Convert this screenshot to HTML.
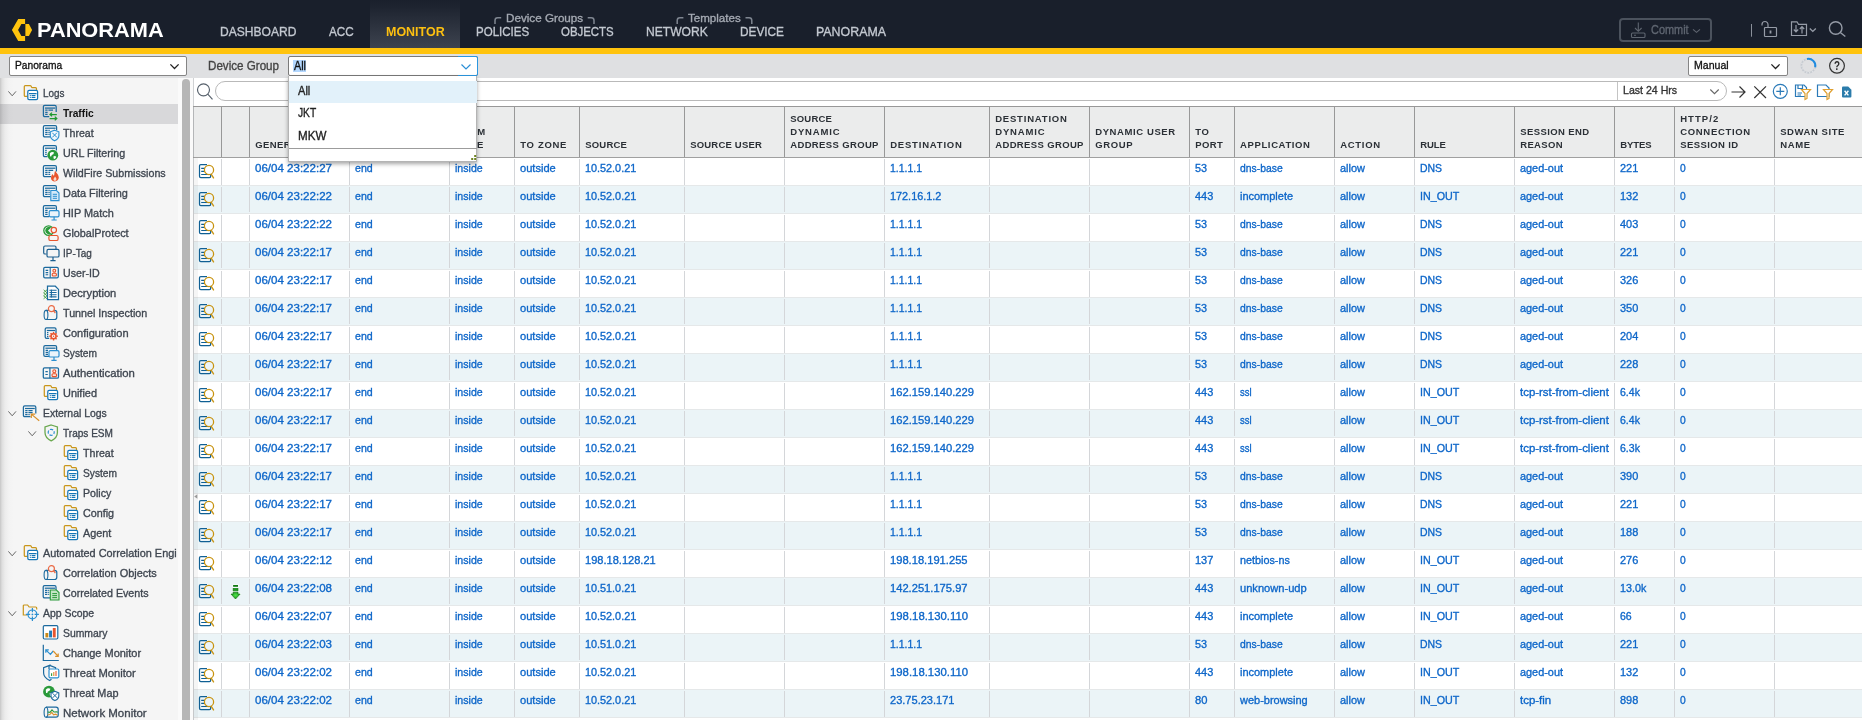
<!DOCTYPE html>
<html lang="en"><head><meta charset="utf-8"><title>Panorama</title>
<style>
*{box-sizing:border-box}
html,body{margin:0;padding:0}
body{width:1862px;height:720px;overflow:hidden;position:relative;background:#fff;font-family:"Liberation Sans",sans-serif;font-size:11px;color:#333}
#wrap{position:absolute;left:0;top:0;width:1862px;height:720px;will-change:transform}
.a,.t,svg{position:absolute}
.t{transform-origin:0 50%;white-space:nowrap;display:block;-webkit-text-stroke:.33px}
svg{overflow:visible}
#top{position:absolute;left:0;top:0;width:1862px;height:48px;background:#191f2b}
#ybar{position:absolute;left:0;top:48px;width:1862px;height:6px;background:#ffc30d}
#sub{position:absolute;left:0;top:54px;width:1862px;height:24px;background:#dfe0e2}
#montab{position:absolute;left:370px;top:0;width:90px;height:48px;background:linear-gradient(#1a202c 0,#1e2430 15%,#3d434f 100%)}
.sel{position:absolute;background:#fff;border:1px solid #858585;border-radius:2px;height:20px}
#side{position:absolute;left:0;top:78px;width:178px;height:642px;background:linear-gradient(90deg,#c6c6c6 0,#dedede 2px,#ececec 5px,#f3f3f3 9px,#f5f5f5 14px)}
.on{position:absolute;left:0;top:104px;width:178px;height:20px;background:linear-gradient(90deg,#b4b4b6 0,#c8c8ca 3px,#d6d6d8 9px,#d8d8da 14px)}
#ghead{position:absolute;left:193px;top:106px;width:1669px;height:52px;background:#ebecec;border-top:1px solid #989898;border-bottom:1px solid #989898}
.hb{position:absolute;top:107px;width:1px;height:50px;background:#989898}
.gr{position:absolute;left:194px;width:1668px;height:28px;background:#fff}
.gr.alt{height:29px;background:#ebf4f7;border-top:1px solid #e5e8e9;border-bottom:1px solid #e5e8e9}
.cb{position:absolute;top:159px;width:1px;height:558px;background:#d4d6d9}
.rg{position:absolute;left:194px;width:1668px;height:3px}
</style></head><body><div id="wrap">

<div id="top"><div id="montab"></div>
<svg style="left:0;top:0" width="40" height="48" viewBox="0 0 40 48"><path d="M18.2 18.9H25.1V23.9H21.4L18.05 30L21.4 35.9H25.1V40.9H18.2L11.9 30Z" fill="#ffc40e"/><path d="M25.4 23.9H28.9L32.1 29.9L28.9 35.9H25.4Z" fill="#ffc40e"/></svg>
<span class="t" style="left:37.0px;top:18.9px;font-size:20px;line-height:22px;transform:scaleX(1.089);color:#fff;font-weight:bold;-webkit-text-stroke:0">PANORAMA</span>
<span class="t" style="left:219.8px;top:24px;font-size:12.8px;line-height:15px;transform:scaleX(0.942);color:#c3c8d0">DASHBOARD</span>
<span class="t" style="left:328.5px;top:24px;font-size:12.8px;line-height:15px;transform:scaleX(0.915);color:#c3c8d0">ACC</span>
<span class="t" style="left:385.5px;top:24px;font-size:12.8px;line-height:15px;transform:scaleX(0.975);color:#fdc010;font-weight:bold;-webkit-text-stroke:0">MONITOR</span>
<span class="t" style="left:476.3px;top:24px;font-size:12.8px;line-height:15px;transform:scaleX(0.901);color:#c3c8d0">POLICIES</span>
<span class="t" style="left:561.3px;top:24px;font-size:12.8px;line-height:15px;transform:scaleX(0.893);color:#c3c8d0">OBJECTS</span>
<span class="t" style="left:646.0px;top:24px;font-size:12.8px;line-height:15px;transform:scaleX(0.943);color:#c3c8d0">NETWORK</span>
<span class="t" style="left:740.0px;top:24px;font-size:12.8px;line-height:15px;transform:scaleX(0.923);color:#c3c8d0">DEVICE</span>
<span class="t" style="left:816.0px;top:24px;font-size:12.8px;line-height:15px;transform:scaleX(0.968);color:#c3c8d0">PANORAMA</span>
<span class="t" style="left:506.0px;top:11.7px;font-size:11px;line-height:12px;transform:scaleX(1.061);color:#a4a9b2">Device Groups</span>
<span class="t" style="left:688.3px;top:11.7px;font-size:11px;line-height:12px;transform:scaleX(1.051);color:#a4a9b2">Templates</span>
<svg style="left:0;top:0" width="800" height="48" viewBox="0 0 800 48"><g fill="none" stroke="#7f8691" stroke-width="1.5"><path d="M495 24V20.5Q495 17.8 497.7 17.8H501.2"/><path d="M587.7 17.8H591.3Q594 17.8 594 20.5V24"/><path d="M677.2 24V20.5Q677.2 17.8 679.9 17.8H683.4"/><path d="M745.5 17.8H749.1Q751.8 17.8 751.8 20.5V24"/></g></svg>
<div class="a" style="left:1619px;top:18px;width:93px;height:24px;border:2px solid #4b525d;border-radius:4px"></div>
<svg style="left:0;top:0" width="1862" height="48" viewBox="0 0 1862 48">
<g fill="none" stroke="#5f6671" stroke-width="1.1"><path d="M1638.3 22.5V31M1635 28L1638.3 31.3L1641.6 28"/><rect x="1631.5" y="33" width="13.5" height="4.5" rx="1"/><path d="M1634 35.3H1636"/></g>
<path d="M1693 29.3L1696.5 32.3L1700 29.3" fill="none" stroke="#5f6671" stroke-width="1.1"/>
<path d="M1751.5 24V36.7" stroke="#8a909a" stroke-width="1"/>
<g fill="none" stroke="#969ca7" stroke-width="1.2"><rect x="1764.5" y="27.5" width="12" height="9" rx=".8"/><path d="M1768 27.5V24.5A3 3 0 0 0 1762 24.5V25.5"/><path d="M1770.5 30.5V33.5" stroke-width="1.8"/></g>
<g fill="none" stroke="#969ca7" stroke-width="1.2"><path d="M1791.5 35.5V21.8H1797L1798.5 24.3H1806.5V35.5Z"/><path d="M1796 25V31.5M1793.8 29.5L1796 31.8L1798.2 29.5M1802 33.5V27M1799.8 29L1802 26.7L1804.2 29"/><path d="M1809.8 28.6L1812.8 31.4L1815.8 28.6" stroke-width="1.4"/></g>
<g fill="none" stroke="#969ca7" stroke-width="1.4"><circle cx="1835.7" cy="28" r="6.3"/><path d="M1840.3 32.5L1845.3 36.5"/></g>
</svg>
<span class="t" style="left:1650.7px;top:23.200000000000003px;font-size:12px;line-height:14px;transform:scaleX(0.910);color:#5f6671">Commit</span>
</div><div id="ybar"></div>
<div id="sub"></div>
<div class="sel" style="left:9px;top:56px;width:178px"></div>
<span class="t" style="left:14.5px;top:58.7px;font-size:11.4px;line-height:12px;transform:scaleX(0.896);color:#111">Panorama</span>
<svg style="left:170px;top:64.2px" width="9" height="5.5" viewBox="0 0 9 5.5"><path d="M0.4 0.4 L4.5 4.5 L8.6 0.4" fill="none" stroke="#222" stroke-width="1.3"/></svg>
<span class="t" style="left:208.3px;top:59px;font-size:12px;line-height:14px;transform:scaleX(0.968);color:#444">Device Group</span>
<div class="sel" style="left:1688px;top:56px;width:100px"></div>
<span class="t" style="left:1693.6px;top:58.7px;font-size:11.4px;line-height:12px;transform:scaleX(0.928);color:#111">Manual</span>
<svg style="left:1771.2px;top:64.2px" width="9" height="5.5" viewBox="0 0 9 5.5"><path d="M0.4 0.4 L4.5 4.5 L8.6 0.4" fill="none" stroke="#222" stroke-width="1.3"/></svg>
<svg style="left:0;top:54px" width="1862" height="24" viewBox="0 54 1862 24">
<circle cx="1808.3" cy="65.8" r="7" fill="none" stroke="#c6cad0" stroke-width="1.7"/><circle cx="1808.3" cy="65.8" r="7" fill="none" stroke="#e3e5e8" stroke-width="1.7" stroke-dasharray="1 2"/>
<path d="M1807 58.9A7 7 0 0 1 1815.2 67.2" fill="none" stroke="#1f8be0" stroke-width="2"/>
<circle cx="1837" cy="65.8" r="7.4" fill="none" stroke="#333" stroke-width="1.2"/>
</svg><span class="t" style="left:1834.0px;top:59.3px;font-size:12px;line-height:14px;transform:scaleX(0.820);color:#2a2a2a;font-weight:bold;-webkit-text-stroke:0">?</span>
<div id="side"></div><div class="on"></div>
<svg style="left:7.5px;top:90.5px" width="8.4" height="5.8" viewBox="0 0 8.4 5.8"><path d="M0.4 0.4 L4.2 4.8 L8.0 0.4" fill="none" stroke="#666" stroke-width="1.0"/></svg>
<svg style="left:23px;top:84px" width="18" height="19" viewBox="0 0 18 19"><path d="M4.6 12.4H2.3Q1.3 12.4 1.3 11.4V2.5Q1.3 1.5 2.3 1.5H7Q7.8 1.5 8.2 2.3L8.6 3.1Q9 3.7 9.8 3.7H12.5Q13.5 3.7 13.5 4.7V6" fill="none" stroke="#c9961a" stroke-width="1.25"/><rect x="4.8" y="6.4" width="9.8" height="9.2" rx="1.3" fill="#fff" stroke="#1575b5" stroke-width="1.25"/><path d="M6 9.6H13.6M6.8 11.5H7.8M8.6 11.5H12.4M6.8 13.4H7.8M8.6 13.4H12.4" stroke="#1575b5" stroke-width="1.2"/></svg>
<span class="t" style="left:43.3px;top:86.7px;font-size:11px;line-height:12px;transform:scaleX(0.901);color:#3f4650">Logs</span>
<svg style="left:43px;top:104px" width="18" height="19" viewBox="0 0 18 19"><path d="M6.2 12.6H1.7999999999999998Q0.4 12.6 0.4 11.2V2.8Q0.4 1.4 1.7999999999999998 1.4H11.799999999999999Q13.2 1.4 13.2 2.8V8" fill="none" stroke="#1c6a9e" stroke-width="1.25"/><path d="M2.0 4.1H12.2" stroke="#1c6a9e" stroke-width="1.25"/><path d="M2.2 6.2H4.6000000000000005M5.4 6.2H10.0M2.2 8.3H4.6000000000000005M2.2 10.3H4.6000000000000005" stroke="#1c6a9e" stroke-width="1.25"/><path d="M13.8 10.5H7M9 8.6L7 10.5L9 12.4M6.6 14.5H13.8M11.8 12.6L13.8 14.5L11.8 16.4" fill="none" stroke="#1e9a2e" stroke-width="1.25"/></svg>
<span class="t" style="left:63.3px;top:106.7px;font-size:11px;line-height:12px;transform:scaleX(0.930);color:#111;font-weight:bold;-webkit-text-stroke:0">Traffic</span>
<svg style="left:43px;top:124px" width="18" height="19" viewBox="0 0 18 19"><path d="M7.5 12.8H1.7999999999999998Q0.4 12.8 0.4 11.4V2.9Q0.4 1.5 1.7999999999999998 1.5H12.2Q13.6 1.5 13.6 2.9V6.6" fill="none" stroke="#1c6a9e" stroke-width="1.25"/><path d="M2.0 4.2H12.6" stroke="#1c6a9e" stroke-width="1.25"/><path d="M2.2 6.3H4.6000000000000005M5.4 6.3H6.7M2.2 8.4H4.6000000000000005M5.4 8.4H6.7M2.2 10.4H4.6000000000000005M5.4 10.4H6.7" stroke="#1c6a9e" stroke-width="1.25"/><path d="M11.6 6.2L15.9 7.800000000000001V11.5Q15.9 14.892 11.6 16.8Q7.3 14.892 7.3 11.5V7.800000000000001Z" fill="#eef6fc" stroke="#2b8fd0" stroke-width="1.1"/><path d="M9.3 8.776L13.899999999999999 13.376000000000001M13.899999999999999 8.776L9.3 13.376000000000001" stroke="#2b8fd0" stroke-width="1"/></svg>
<span class="t" style="left:63.3px;top:126.69999999999999px;font-size:11px;line-height:12px;transform:scaleX(0.966);color:#3f4650">Threat</span>
<svg style="left:43px;top:144px" width="18" height="19" viewBox="0 0 18 19"><path d="M4.5 12.6H1.7999999999999998Q0.4 12.6 0.4 11.2V2.9Q0.4 1.5 1.7999999999999998 1.5H12.0Q13.4 1.5 13.4 2.9V6.6" fill="none" stroke="#1c6a9e" stroke-width="1.25"/><path d="M2.0 4.2H12.4" stroke="#1c6a9e" stroke-width="1.25"/><path d="M2.2 6.3H3.7M2.2 8.4H3.7M2.2 10.4H3.7" stroke="#1c6a9e" stroke-width="1.25"/><circle cx="9.8" cy="11.2" r="5.4" fill="#2a9a3a"/><path d="M6.83 9.309999999999999q1.89 -1.89 4.32 -0.81q-0.54 2.43 -2.43 2.43q-0.27 2.16 -1.62 1.35z" fill="#fff"/><path d="M10.34 12.549999999999999q2.16 -1.08 2.9700000000000006 0.54q-0.81 2.16 -2.43 2.16z" fill="#fff"/></svg>
<span class="t" style="left:63.3px;top:146.7px;font-size:11px;line-height:12px;transform:scaleX(0.975);color:#3f4650">URL Filtering</span>
<svg style="left:43px;top:164px" width="18" height="19" viewBox="0 0 18 19"><path d="M8 12.6H1.7999999999999998Q0.4 12.6 0.4 11.2V2.9Q0.4 1.5 1.7999999999999998 1.5H12.0Q13.4 1.5 13.4 2.9V7.6" fill="none" stroke="#1c6a9e" stroke-width="1.25"/><path d="M2.0 4.2H12.4" stroke="#1c6a9e" stroke-width="1.25"/><path d="M2.2 6.3H4.6000000000000005M5.4 6.3H10.2M2.2 8.4H4.6000000000000005M5.4 8.4H7.2M2.2 10.4H4.6000000000000005M5.4 10.4H7.2" stroke="#1c6a9e" stroke-width="1.25"/><path d="M12.2 6.8C13 9 15.8 10.5 15.8 13.6C15.8 16 14 17.4 11.9 17.4C9.6 17.4 8 15.9 8 13.9C8 12.2 8.9 11.2 9.5 10.1C9.9 11.1 10.4 11.6 11 11.7C11.6 10.2 11.2 8.5 12.2 6.8Z" fill="#e8552d"/><path d="M12 12.5C12.8 13.6 13.6 14.2 13.4 15.4C13.2 16.4 12.5 16.8 11.8 16.8C11 16.8 10.4 16.2 10.5 15.3C10.6 14.3 11.6 13.8 12 12.5Z" fill="#fbd9cc"/></svg>
<span class="t" style="left:63.3px;top:166.7px;font-size:11px;line-height:12px;transform:scaleX(0.971);color:#3f4650">WildFire Submissions</span>
<svg style="left:43px;top:184px" width="18" height="19" viewBox="0 0 18 19"><path d="M7.5 12.6H1.7999999999999998Q0.4 12.6 0.4 11.2V2.9Q0.4 1.5 1.7999999999999998 1.5H12.0Q13.4 1.5 13.4 2.9V6" fill="none" stroke="#1c6a9e" stroke-width="1.25"/><path d="M2.0 4.2H12.4" stroke="#1c6a9e" stroke-width="1.25"/><path d="M2.2 6.3H4.6000000000000005M5.4 6.3H6.7M2.2 8.4H4.6000000000000005M5.4 8.4H6.7M2.2 10.4H4.6000000000000005M5.4 10.4H6.7" stroke="#1c6a9e" stroke-width="1.25"/><path d="M7.8 6.5H13.5L16 9V16.6H7.8Z" fill="#d4e9f8" stroke="#2b8fd0" stroke-width="1.1"/><path d="M9.8 10.3H14M9.8 12.3H14M9.8 14.3H14" stroke="#2b8fd0" stroke-width="1"/></svg>
<span class="t" style="left:63.3px;top:186.7px;font-size:11px;line-height:12px;transform:scaleX(0.992);color:#3f4650">Data Filtering</span>
<svg style="left:43px;top:204px" width="18" height="19" viewBox="0 0 18 19"><path d="M6 12.6H1.7999999999999998Q0.4 12.6 0.4 11.2V2.9Q0.4 1.5 1.7999999999999998 1.5H12.0Q13.4 1.5 13.4 2.9V6.3" fill="none" stroke="#1c6a9e" stroke-width="1.25"/><path d="M2.0 4.2H12.4" stroke="#1c6a9e" stroke-width="1.25"/><path d="M2.2 6.3H4.6000000000000005M2.2 8.4H4.6000000000000005M2.2 10.4H4.6000000000000005" stroke="#1c6a9e" stroke-width="1.25"/><rect x="6.2" y="6.6" width="9.8" height="6.200000000000001" rx="1.3" fill="#eaf4fb" stroke="#2b8fd0" stroke-width="1.2"/><path d="M11.1 12.8V16M8.5 16H13.7" stroke="#2b8fd0" stroke-width="1.2" fill="none"/></svg>
<span class="t" style="left:63.3px;top:206.7px;font-size:11px;line-height:12px;transform:scaleX(0.991);color:#3f4650">HIP Match</span>
<svg style="left:43px;top:224px" width="18" height="19" viewBox="0 0 18 19"><circle cx="5.6" cy="6.6" r="4.8" fill="none" stroke="#2a9a3a" stroke-width="1.3"/><path d="M8.2 3.4A4 4 0 0 0 2.2 6.6A4 4 0 0 0 8.2 9.8L5 6.6Z" fill="#2a9a3a"/><circle cx="10.8" cy="6.1" r="2.7" fill="#f5f5f5" stroke="#e8552d" stroke-width="1.2"/><rect x="5.9" y="11.5" width="9.2" height="5" rx="1.6" fill="#f5f5f5" stroke="#e8552d" stroke-width="1.2"/></svg>
<span class="t" style="left:63.3px;top:226.7px;font-size:11px;line-height:12px;transform:scaleX(0.984);color:#3f4650">GlobalProtect</span>
<svg style="left:43px;top:244px" width="18" height="19" viewBox="0 0 18 19"><path d="M3.5 10H2Q0.7 10 0.7 8.7V3.3Q0.7 2 2 2H11.7Q13 2 13 3.3V5" fill="none" stroke="#1c5f8f" stroke-width="1.2"/><rect x="4" y="5.4" width="12" height="7.6" rx="1.3" fill="#f5f5f5" stroke="#1c5f8f" stroke-width="1.2"/><path d="M10.0 13V16.6M7.4 16.6H12.6" stroke="#1c5f8f" stroke-width="1.2" fill="none"/></svg>
<span class="t" style="left:63.3px;top:246.7px;font-size:11px;line-height:12px;transform:scaleX(0.906);color:#3f4650">IP-Tag</span>
<svg style="left:43px;top:264px" width="18" height="19" viewBox="0 0 18 19"><rect x="0.7" y="3.4" width="14.6" height="10.4" rx="1.3" fill="none" stroke="#1c6a9e" stroke-width="1.25"/><path d="M7.2 3.4V13.8M2.6 6.4H5.2M2.6 8.6H5.2M2.6 10.8H5.2" stroke="#1c6a9e" stroke-width="1.1"/><circle cx="11.3" cy="6.7" r="1.4" fill="#fbe3da" stroke="#e8552d" stroke-width="1.1"/><rect x="9.2" y="9.2" width="4.2" height="2.8" rx="1" fill="#fbe3da" stroke="#e8552d" stroke-width="1.1"/></svg>
<span class="t" style="left:63.3px;top:266.7px;font-size:11px;line-height:12px;transform:scaleX(0.968);color:#3f4650">User-ID</span>
<svg style="left:43px;top:284px" width="18" height="19" viewBox="0 0 18 19"><path d="M0.6 5.8L4 8.8M4 5.8L0.6 8.8" stroke="#3fa13f" stroke-width="0.9"/><path d="M0.6 8.8L4 11.8M4 8.8L0.6 11.8" stroke="#3fa13f" stroke-width="0.9"/><path d="M0.6 11.8L4 14.8M4 11.8L0.6 14.8" stroke="#3fa13f" stroke-width="0.9"/><path d="M4.5 2.2H12.3L15.5 5.4V15.5H4.5Z" fill="#fff" stroke="#1c6a9e" stroke-width="1.25"/><path d="M6.4 6.3H13.6M6.4 8.5H13.6M6.4 10.7H13.6M6.4 12.9H13.6M8.4 5.5V13.8" stroke="#1c6a9e" stroke-width="1.1"/></svg>
<span class="t" style="left:63.3px;top:286.7px;font-size:11px;line-height:12px;transform:scaleX(1.014);color:#3f4650">Decryption</span>
<svg style="left:43px;top:304px" width="18" height="19" viewBox="0 0 18 19"><path d="M3 6.4H11.600000000000001Q13.8 6.4 13.8 8.600000000000001V13.3Q13.8 15.5 11.600000000000001 15.5H3" fill="none" stroke="#1c6a9e" stroke-width="1.2"/><ellipse cx="3" cy="10.95" rx="1.9" ry="4.55" fill="none" stroke="#1c6a9e" stroke-width="1.1"/><circle cx="8.4" cy="4.7" r="3" fill="#f5f5f5" stroke="#ea6a45" stroke-width="1.2"/><path d="M10.6 6.9L12.4 9" stroke="#ea6a45" stroke-width="1.3"/></svg>
<span class="t" style="left:63.3px;top:306.7px;font-size:11px;line-height:12px;transform:scaleX(0.974);color:#3f4650">Tunnel Inspection</span>
<svg style="left:43px;top:324px" width="18" height="19" viewBox="0 0 18 19"><path d="M6.2 14.3H3.6Q2.2 14.3 2.2 12.9V5.199999999999999Q2.2 3.8 3.6 3.8H11.6Q13 3.8 13 5.199999999999999V9" fill="none" stroke="#1c6a9e" stroke-width="1.25"/><path d="M3.8000000000000003 6.5H12" stroke="#1c6a9e" stroke-width="1.25"/><path d="M4.0 8.6H5.4M4.0 10.7H5.4M4.0 12.7H5.4" stroke="#1c6a9e" stroke-width="1.25"/><rect x="9.85" y="7.9" width="1.4" height="1.7" fill="#e8552d" transform="rotate(0 10.55 12.2)"/><rect x="9.85" y="7.9" width="1.4" height="1.7" fill="#e8552d" transform="rotate(45 10.55 12.2)"/><rect x="9.85" y="7.9" width="1.4" height="1.7" fill="#e8552d" transform="rotate(90 10.55 12.2)"/><rect x="9.85" y="7.9" width="1.4" height="1.7" fill="#e8552d" transform="rotate(135 10.55 12.2)"/><rect x="9.85" y="7.9" width="1.4" height="1.7" fill="#e8552d" transform="rotate(180 10.55 12.2)"/><rect x="9.85" y="7.9" width="1.4" height="1.7" fill="#e8552d" transform="rotate(225 10.55 12.2)"/><rect x="9.85" y="7.9" width="1.4" height="1.7" fill="#e8552d" transform="rotate(270 10.55 12.2)"/><rect x="9.85" y="7.9" width="1.4" height="1.7" fill="#e8552d" transform="rotate(315 10.55 12.2)"/><circle cx="10.55" cy="12.2" r="2.5" fill="#f5f5f5" stroke="#e8552d" stroke-width="1.5"/><circle cx="10.55" cy="12.2" r="0.7" fill="#e8552d"/></svg>
<span class="t" style="left:63.3px;top:326.7px;font-size:11px;line-height:12px;transform:scaleX(1.002);color:#3f4650">Configuration</span>
<svg style="left:43px;top:344px" width="18" height="19" viewBox="0 0 18 19"><path d="M6 12.4H2.2Q0.8 12.4 0.8 11.0V2.9Q0.8 1.5 2.2 1.5H12.2Q13.6 1.5 13.6 2.9V6.3" fill="none" stroke="#1c6a9e" stroke-width="1.25"/><path d="M2.4000000000000004 4.2H12.6" stroke="#1c6a9e" stroke-width="1.25"/><path d="M2.6 6.3H5.0M2.6 8.4H5.0M2.6 10.4H5.0" stroke="#1c6a9e" stroke-width="1.25"/><rect x="6" y="6.6" width="10" height="6.4" rx="1.3" fill="#eaf4fb" stroke="#2b8fd0" stroke-width="1.2"/><path d="M11.0 13V16.4M8.4 16.4H13.6" stroke="#2b8fd0" stroke-width="1.2" fill="none"/></svg>
<span class="t" style="left:63.3px;top:346.7px;font-size:11px;line-height:12px;transform:scaleX(0.927);color:#3f4650">System</span>
<svg style="left:43px;top:364px" width="18" height="19" viewBox="0 0 18 19"><rect x="0.3" y="3.8" width="15.2" height="10.4" rx="1.3" fill="none" stroke="#1c6a9e" stroke-width="1.25"/><path d="M6.9 3.8V14.2M2.4 7.6H4.8M2.4 10.5H4.8" stroke="#1c6a9e" stroke-width="1.2"/><circle cx="11.3" cy="7.2" r="1.5" fill="#fbe3da" stroke="#e8552d" stroke-width="1.1"/><rect x="9" y="9.8" width="4.6" height="2.8" rx="1" fill="#fbe3da" stroke="#e8552d" stroke-width="1.1"/></svg>
<span class="t" style="left:63.3px;top:366.7px;font-size:11px;line-height:12px;transform:scaleX(1.030);color:#3f4650">Authentication</span>
<svg style="left:43px;top:384px" width="18" height="19" viewBox="0 0 18 19"><path d="M4.6 12.4H2.3Q1.3 12.4 1.3 11.4V2.5Q1.3 1.5 2.3 1.5H7Q7.8 1.5 8.2 2.3L8.6 3.1Q9 3.7 9.8 3.7H12.5Q13.5 3.7 13.5 4.7V6" fill="none" stroke="#c9961a" stroke-width="1.25"/><rect x="4.8" y="6.4" width="9.8" height="9.2" rx="1.3" fill="#fff" stroke="#1575b5" stroke-width="1.25"/><path d="M6 9.6H13.6M6.8 11.5H7.8M8.6 11.5H12.4M6.8 13.4H7.8M8.6 13.4H12.4" stroke="#1575b5" stroke-width="1.2"/></svg>
<span class="t" style="left:63.3px;top:386.7px;font-size:11px;line-height:12px;transform:scaleX(0.992);color:#3f4650">Unified</span>
<svg style="left:7.5px;top:410.5px" width="8.4" height="5.8" viewBox="0 0 8.4 5.8"><path d="M0.4 0.4 L4.2 4.8 L8.0 0.4" fill="none" stroke="#666" stroke-width="1.0"/></svg>
<svg style="left:23px;top:404px" width="18" height="19" viewBox="0 0 18 19"><path d="M7.5 12.7H1.7999999999999998Q0.4 12.7 0.4 11.299999999999999V3.2Q0.4 1.8 1.7999999999999998 1.8H11.4Q12.8 1.8 12.8 3.2V9.5" fill="none" stroke="#1c6a9e" stroke-width="1.25"/><path d="M2.0 4.5H11.8" stroke="#1c6a9e" stroke-width="1.25"/><path d="M2.2 6.6H4.6000000000000005M5.4 6.6H9.6M2.2 8.7H4.6000000000000005M5.4 8.7H9.6M2.2 10.7H4.6000000000000005M5.4 10.7H6.7" stroke="#1c6a9e" stroke-width="1.25"/><path d="M16.2 16.8L8.6 10.4M12.2 10.2H8.3V14" fill="none" stroke="#d9902a" stroke-width="1.2"/></svg>
<span class="t" style="left:43.3px;top:406.7px;font-size:11px;line-height:12px;transform:scaleX(0.948);color:#3f4650">External Logs</span>
<svg style="left:27.5px;top:430.5px" width="8.4" height="5.8" viewBox="0 0 8.4 5.8"><path d="M0.4 0.4 L4.2 4.8 L8.0 0.4" fill="none" stroke="#666" stroke-width="1.0"/></svg>
<svg style="left:43px;top:424px" width="18" height="19" viewBox="0 0 18 19"><path d="M8.2 1L14.4 3V8.5Q14.4 13.8 8.2 16.8Q2 13.8 2 8.5V3Z" fill="none" stroke="#6aa84f" stroke-width="1.3"/><circle cx="8.2" cy="8.3" r="3" fill="none" stroke="#2b8fd0" stroke-width="1.2" stroke-dasharray="3.3 1.4" stroke-dashoffset="1.6"/></svg>
<span class="t" style="left:63.3px;top:426.7px;font-size:11px;line-height:12px;transform:scaleX(0.915);color:#3f4650">Traps ESM</span>
<svg style="left:63px;top:444px" width="18" height="19" viewBox="0 0 18 19"><path d="M4.6 12.4H2.3Q1.3 12.4 1.3 11.4V2.5Q1.3 1.5 2.3 1.5H7Q7.8 1.5 8.2 2.3L8.6 3.1Q9 3.7 9.8 3.7H12.5Q13.5 3.7 13.5 4.7V6" fill="none" stroke="#c9961a" stroke-width="1.25"/><rect x="4.8" y="6.4" width="9.8" height="9.2" rx="1.3" fill="#fff" stroke="#1575b5" stroke-width="1.25"/><path d="M6 9.6H13.6M6.8 11.5H7.8M8.6 11.5H12.4M6.8 13.4H7.8M8.6 13.4H12.4" stroke="#1575b5" stroke-width="1.2"/></svg>
<span class="t" style="left:83.3px;top:446.7px;font-size:11px;line-height:12px;transform:scaleX(0.966);color:#3f4650">Threat</span>
<svg style="left:63px;top:464px" width="18" height="19" viewBox="0 0 18 19"><path d="M4.6 12.4H2.3Q1.3 12.4 1.3 11.4V2.5Q1.3 1.5 2.3 1.5H7Q7.8 1.5 8.2 2.3L8.6 3.1Q9 3.7 9.8 3.7H12.5Q13.5 3.7 13.5 4.7V6" fill="none" stroke="#c9961a" stroke-width="1.25"/><rect x="4.8" y="6.4" width="9.8" height="9.2" rx="1.3" fill="#fff" stroke="#1575b5" stroke-width="1.25"/><path d="M6 9.6H13.6M6.8 11.5H7.8M8.6 11.5H12.4M6.8 13.4H7.8M8.6 13.4H12.4" stroke="#1575b5" stroke-width="1.2"/></svg>
<span class="t" style="left:83.3px;top:466.7px;font-size:11px;line-height:12px;transform:scaleX(0.927);color:#3f4650">System</span>
<svg style="left:63px;top:484px" width="18" height="19" viewBox="0 0 18 19"><path d="M4.6 12.4H2.3Q1.3 12.4 1.3 11.4V2.5Q1.3 1.5 2.3 1.5H7Q7.8 1.5 8.2 2.3L8.6 3.1Q9 3.7 9.8 3.7H12.5Q13.5 3.7 13.5 4.7V6" fill="none" stroke="#c9961a" stroke-width="1.25"/><rect x="4.8" y="6.4" width="9.8" height="9.2" rx="1.3" fill="#fff" stroke="#1575b5" stroke-width="1.25"/><path d="M6 9.6H13.6M6.8 11.5H7.8M8.6 11.5H12.4M6.8 13.4H7.8M8.6 13.4H12.4" stroke="#1575b5" stroke-width="1.2"/></svg>
<span class="t" style="left:83.3px;top:486.7px;font-size:11px;line-height:12px;transform:scaleX(0.964);color:#3f4650">Policy</span>
<svg style="left:63px;top:504px" width="18" height="19" viewBox="0 0 18 19"><path d="M4.6 12.4H2.3Q1.3 12.4 1.3 11.4V2.5Q1.3 1.5 2.3 1.5H7Q7.8 1.5 8.2 2.3L8.6 3.1Q9 3.7 9.8 3.7H12.5Q13.5 3.7 13.5 4.7V6" fill="none" stroke="#c9961a" stroke-width="1.25"/><rect x="4.8" y="6.4" width="9.8" height="9.2" rx="1.3" fill="#fff" stroke="#1575b5" stroke-width="1.25"/><path d="M6 9.6H13.6M6.8 11.5H7.8M8.6 11.5H12.4M6.8 13.4H7.8M8.6 13.4H12.4" stroke="#1575b5" stroke-width="1.2"/></svg>
<span class="t" style="left:83.3px;top:506.70000000000005px;font-size:11px;line-height:12px;transform:scaleX(0.978);color:#3f4650">Config</span>
<svg style="left:63px;top:524px" width="18" height="19" viewBox="0 0 18 19"><path d="M4.6 12.4H2.3Q1.3 12.4 1.3 11.4V2.5Q1.3 1.5 2.3 1.5H7Q7.8 1.5 8.2 2.3L8.6 3.1Q9 3.7 9.8 3.7H12.5Q13.5 3.7 13.5 4.7V6" fill="none" stroke="#c9961a" stroke-width="1.25"/><rect x="4.8" y="6.4" width="9.8" height="9.2" rx="1.3" fill="#fff" stroke="#1575b5" stroke-width="1.25"/><path d="M6 9.6H13.6M6.8 11.5H7.8M8.6 11.5H12.4M6.8 13.4H7.8M8.6 13.4H12.4" stroke="#1575b5" stroke-width="1.2"/></svg>
<span class="t" style="left:83.3px;top:526.7px;font-size:11px;line-height:12px;transform:scaleX(0.984);color:#3f4650">Agent</span>
<svg style="left:7.5px;top:550.5px" width="8.4" height="5.8" viewBox="0 0 8.4 5.8"><path d="M0.4 0.4 L4.2 4.8 L8.0 0.4" fill="none" stroke="#666" stroke-width="1.0"/></svg>
<svg style="left:23px;top:544px" width="18" height="19" viewBox="0 0 18 19"><path d="M4.6 12.4H2.3Q1.3 12.4 1.3 11.4V2.5Q1.3 1.5 2.3 1.5H7Q7.8 1.5 8.2 2.3L8.6 3.1Q9 3.7 9.8 3.7H12.5Q13.5 3.7 13.5 4.7V6" fill="none" stroke="#c9961a" stroke-width="1.25"/><rect x="4.8" y="6.4" width="9.8" height="9.2" rx="1.3" fill="#fff" stroke="#1575b5" stroke-width="1.25"/><path d="M6 9.6H13.6M6.8 11.5H7.8M8.6 11.5H12.4M6.8 13.4H7.8M8.6 13.4H12.4" stroke="#1575b5" stroke-width="1.2"/></svg>
<span class="t" style="left:43.3px;top:546.7px;font-size:11px;line-height:12px;transform:scaleX(0.989);color:#3f4650">Automated Correlation Engi</span>
<svg style="left:43px;top:564px" width="18" height="19" viewBox="0 0 18 19"><path d="M3 6.4H11.600000000000001Q13.8 6.4 13.8 8.600000000000001V13.3Q13.8 15.5 11.600000000000001 15.5H3" fill="none" stroke="#1c6a9e" stroke-width="1.2"/><ellipse cx="3" cy="10.95" rx="1.9" ry="4.55" fill="none" stroke="#1c6a9e" stroke-width="1.1"/><circle cx="8.4" cy="4.7" r="3" fill="#f5f5f5" stroke="#ea6a45" stroke-width="1.2"/><path d="M10.6 6.9L12.4 9" stroke="#ea6a45" stroke-width="1.3"/></svg>
<span class="t" style="left:63.3px;top:566.7px;font-size:11px;line-height:12px;transform:scaleX(0.996);color:#3f4650">Correlation Objects</span>
<svg style="left:43px;top:584px" width="18" height="19" viewBox="0 0 18 19"><path d="M7 13.8H1.5999999999999999Q0.2 13.8 0.2 12.4V2.9Q0.2 1.5 1.5999999999999999 1.5H11.6Q13 1.5 13 2.9V6" fill="none" stroke="#1c6a9e" stroke-width="1.25"/><path d="M1.8 4.2H12" stroke="#1c6a9e" stroke-width="1.25"/><path d="M2.0 6.3H4.4M5.2 6.3H6.2M2.0 8.4H4.4M5.2 8.4H6.2M2.0 10.4H4.4M5.2 10.4H6.2" stroke="#1c6a9e" stroke-width="1.25"/><path d="M7.3 6H13.4L16 8.6V16H7.3Z" fill="#c4e6c5" stroke="#2a9a3a" stroke-width="1.1"/><path d="M9.3 9.6H14M9.3 11.6H14M9.3 13.6H14" stroke="#2a9a3a" stroke-width="1"/></svg>
<span class="t" style="left:63.3px;top:586.7px;font-size:11px;line-height:12px;transform:scaleX(0.972);color:#3f4650">Correlated Events</span>
<svg style="left:7.5px;top:610.5px" width="8.4" height="5.8" viewBox="0 0 8.4 5.8"><path d="M0.4 0.4 L4.2 4.8 L8.0 0.4" fill="none" stroke="#666" stroke-width="1.0"/></svg>
<svg style="left:23px;top:604px" width="18" height="19" viewBox="0 0 18 19"><path d="M4.5 11H0.3V2Q0.3 1 1.3 1H4.6L6.1 3H12.7Q13.7 3 13.7 4V5.5" fill="none" stroke="#c9961a" stroke-width="1.2"/><circle cx="9.4" cy="10.4" r="4.4" fill="none" stroke="#2b8fd0" stroke-width="1.2"/><path d="M9.4 3.9V8.2M9.4 12.6V16.9M2.9 10.4H7.2M11.6 10.4H15.9" stroke="#2b8fd0" stroke-width="1.2"/><circle cx="9.4" cy="10.4" r=".9" fill="#2b8fd0"/></svg>
<span class="t" style="left:43.3px;top:606.7px;font-size:11px;line-height:12px;transform:scaleX(0.949);color:#3f4650">App Scope</span>
<svg style="left:43px;top:624px" width="18" height="19" viewBox="0 0 18 19"><rect x="0.3" y="1.6" width="14.5" height="13.4" rx="1.2" fill="#fff" stroke="#1c6a9e" stroke-width="1.2"/><rect x="2.4" y="9" width="2.9" height="4.4" fill="#c98a1a"/><rect x="6.1" y="6.6" width="2.9" height="6.8" fill="#1f7ab8"/><rect x="9.8" y="4" width="2.9" height="9.4" fill="#e8552d"/></svg>
<span class="t" style="left:63.3px;top:626.7px;font-size:11px;line-height:12px;transform:scaleX(0.945);color:#3f4650">Summary</span>
<svg style="left:43px;top:644px" width="18" height="19" viewBox="0 0 18 19"><path d="M0.3 0.8V16.5H15.8" fill="none" stroke="#1c6a9e" stroke-width="1.2"/><path d="M5.8 5.8H2.8V8.8M2.8 5.8L7.4 10.4L10.2 7" fill="none" stroke="#2b8fd0" stroke-width="1.2"/><path d="M10.2 7L15.2 12.4M15.2 9.4V12.4H12.2" fill="none" stroke="#d9902a" stroke-width="1.2"/></svg>
<span class="t" style="left:63.3px;top:646.7px;font-size:11px;line-height:12px;transform:scaleX(0.998);color:#3f4650">Change Monitor</span>
<svg style="left:43px;top:664px" width="18" height="19" viewBox="0 0 18 19"><path d="M6 5V2.8L6.6 1.4L0.6 3.6V9Q0.6 13.5 6.6 16.5L8.5 15.3" fill="none" stroke="#1c6a9e" stroke-width="1.2"/><path d="M6.6 1.4L12.6 3.6V5" fill="none" stroke="#1c6a9e" stroke-width="1.2"/><rect x="6" y="5" width="9.8" height="8.8" rx="1.2" fill="#fff" stroke="#2b8fd0" stroke-width="1.2"/><path d="M8.6 9.2V12" stroke="#2a9a3a" stroke-width="1.1"/><path d="M10.8 8V12" stroke="#d9902a" stroke-width="1.1"/><path d="M13 7V12" stroke="#e8552d" stroke-width="1.1"/></svg>
<span class="t" style="left:63.3px;top:666.7px;font-size:11px;line-height:12px;transform:scaleX(1.017);color:#3f4650">Threat Monitor</span>
<svg style="left:43px;top:684px" width="18" height="19" viewBox="0 0 18 19"><circle cx="6" cy="7.7" r="5.9" fill="#2a9a3a"/><path d="M2.7549999999999994 5.635q2.065 -2.065 4.720000000000001 -0.885q-0.5900000000000001 2.6550000000000002 -2.6550000000000002 2.6550000000000002q-0.29500000000000004 2.3600000000000003 -1.77 1.475z" fill="#fff"/><path d="M6.59 9.175q2.3600000000000003 -1.1800000000000002 3.2450000000000006 0.5900000000000001q-0.885 2.3600000000000003 -2.6550000000000002 2.3600000000000003z" fill="#fff"/><path d="M11.9 7.3L15.8 8.9V11.95Q15.8 14.926 11.9 16.6Q8 14.926 8 11.95V8.9Z" fill="#fff" stroke="#1c6a9e" stroke-width="1.1"/><path d="M9.600000000000001 9.277999999999999L14.2 13.878M14.2 9.277999999999999L9.600000000000001 13.878" stroke="#1c6a9e" stroke-width="1"/></svg>
<span class="t" style="left:63.3px;top:686.7px;font-size:11px;line-height:12px;transform:scaleX(0.986);color:#3f4650">Threat Map</span>
<svg style="left:43px;top:704px" width="18" height="19" viewBox="0 0 18 19"><path d="M3 3.2H13.0Q15.2 3.2 15.2 5.4V11.0Q15.2 13.2 13.0 13.2H3" fill="none" stroke="#1c6a9e" stroke-width="1.2"/><ellipse cx="3" cy="8.2" rx="1.9" ry="5.0" fill="none" stroke="#1c6a9e" stroke-width="1.1"/><path d="M4.5 8L7 8.3L9 5.8L11 8L13.5 7.8L15 8.3" fill="none" stroke="#2a9a3a" stroke-width="1.1"/><path d="M4.5 11L6.8 10.6L8.8 8.4L10.6 10.8L12.6 10.2L14.6 11.2" fill="none" stroke="#d9902a" stroke-width="1.1"/></svg>
<span class="t" style="left:63.3px;top:706.7px;font-size:11px;line-height:12px;transform:scaleX(1.044);color:#3f4650">Network Monitor</span>
<div class="a" style="left:178px;top:78px;width:15px;height:642px;background:#fafafa"></div>
<div class="a" style="left:182.2px;top:79px;width:7.6px;height:641px;background:#b6b6b6;border-radius:4px 4px 0 0"></div>
<div class="a" style="left:193px;top:78px;width:1669px;height:28px;background:#fff;border-left:1px solid #cfd1d3"></div>
<div class="a" style="left:215px;top:81px;width:1512px;height:20px;border:1px solid #b9b9b9;border-radius:10px;background:#fff"></div>
<div class="a" style="left:1617px;top:82px;width:1px;height:18px;background:#c4c4c4"></div>
<svg style="left:0;top:78px" width="1862" height="28" viewBox="0 78 1862 28">
<g fill="none" stroke="#56606b" stroke-width="1.15"><circle cx="203.5" cy="89.8" r="6"/><path d="M207.8 94.2L212.5 99.3"/></g>
<path d="M1710.3 89.5L1714.5 93.7L1718.7 89.5" fill="none" stroke="#666" stroke-width="1.1"/>
<g fill="none" stroke="#333" stroke-width="1.2"><path d="M1731.5 92H1745M1739.5 86.5L1745 92L1739.5 97.5"/><path d="M1754.3 86.3L1766 98M1766 86.3L1754.3 98"/></g>
<g fill="none" stroke="#2a7ab8" stroke-width="1.2"><circle cx="1780.3" cy="91.3" r="7"/><path d="M1776.3 91.3H1784.3M1780.3 87.3V95.3"/></g>
<g fill="none" stroke-width="1.2"><path d="M1795.5 85H1804L1806.5 87.5V96.5H1795.5Z" stroke="#2a7ab8"/><path d="M1798 85V88.5H1802.5V85M1797.5 93H1802M1797.5 95H1801" stroke="#2a7ab8"/><path d="M1801.5 89.5H1810.5L1807 93.5V98.5L1805 99.5V93.5Z" fill="#fff" stroke="#e0a030"/></g>
<g fill="none" stroke-width="1.2"><path d="M1817.5 85H1826L1829 88V96.5H1817.5Z" stroke="#2a7ab8"/><path d="M1823.5 89.5H1832.5L1829 93.5V98.5L1827 99.5V93.5Z" fill="#fff" stroke="#e0a030"/></g>
<path d="M1843 86.6H1848.2L1851.4 89.8V96.5Q1851.4 97.5 1850.4 97.5H1843Q1842 97.5 1842 96.5V87.6Q1842 86.6 1843 86.6Z" fill="#2b7cab"/><path d="M1844.6 90.8L1848.4 95.4M1848.4 90.8L1844.6 95.4" stroke="#fff" stroke-width="1.4"/>
</svg>
<span class="t" style="left:1622.8px;top:84.2px;font-size:11px;line-height:12px;transform:scaleX(0.963);color:#333">Last 24 Hrs</span>
<div id="ghead"></div>
<div class="hb" style="left:193px;background:#b4b6b8"></div>
<div class="hb" style="left:221px"></div>
<div class="hb" style="left:249px"></div>
<div class="hb" style="left:349px"></div>
<div class="hb" style="left:449px"></div>
<div class="hb" style="left:514px"></div>
<div class="hb" style="left:579px"></div>
<div class="hb" style="left:684px"></div>
<div class="hb" style="left:784px"></div>
<div class="hb" style="left:884px"></div>
<div class="hb" style="left:989px"></div>
<div class="hb" style="left:1089px"></div>
<div class="hb" style="left:1189px"></div>
<div class="hb" style="left:1234px"></div>
<div class="hb" style="left:1334px"></div>
<div class="hb" style="left:1414px"></div>
<div class="hb" style="left:1514px"></div>
<div class="hb" style="left:1614px"></div>
<div class="hb" style="left:1674px"></div>
<div class="hb" style="left:1774px"></div>
<span class="t" style="left:255.2px;top:138.5px;font-size:9.5px;line-height:11px;transform:scaleX(1.000);color:#2b3036;font-weight:bold;-webkit-text-stroke:0;letter-spacing:0.38px">GENERATE TIME</span>
<span class="t" style="left:355.2px;top:138.5px;font-size:9.5px;line-height:11px;transform:scaleX(1.000);color:#2b3036;font-weight:bold;-webkit-text-stroke:0;letter-spacing:0.40px">TYPE</span>
<span class="t" style="left:455.2px;top:125.5px;font-size:9.5px;line-height:11px;transform:scaleX(1.000);color:#2b3036;font-weight:bold;-webkit-text-stroke:0;letter-spacing:0.71px">FROM</span>
<span class="t" style="left:455.2px;top:138.5px;font-size:9.5px;line-height:11px;transform:scaleX(1.000);color:#2b3036;font-weight:bold;-webkit-text-stroke:0;letter-spacing:0.56px">ZONE</span>
<span class="t" style="left:520.2px;top:138.5px;font-size:9.5px;line-height:11px;transform:scaleX(1.000);color:#2b3036;font-weight:bold;-webkit-text-stroke:0;letter-spacing:0.69px">TO ZONE</span>
<span class="t" style="left:585.2px;top:138.5px;font-size:9.5px;line-height:11px;transform:scaleX(1.000);color:#2b3036;font-weight:bold;-webkit-text-stroke:0;letter-spacing:0.21px">SOURCE</span>
<span class="t" style="left:690.2px;top:138.5px;font-size:9.5px;line-height:11px;transform:scaleX(1.000);color:#2b3036;font-weight:bold;-webkit-text-stroke:0;letter-spacing:0.20px">SOURCE USER</span>
<span class="t" style="left:790.2px;top:112.5px;font-size:9.5px;line-height:11px;transform:scaleX(1.000);color:#2b3036;font-weight:bold;-webkit-text-stroke:0;letter-spacing:0.21px">SOURCE</span>
<span class="t" style="left:790.2px;top:125.5px;font-size:9.5px;line-height:11px;transform:scaleX(1.000);color:#2b3036;font-weight:bold;-webkit-text-stroke:0;letter-spacing:0.83px">DYNAMIC</span>
<span class="t" style="left:790.2px;top:138.5px;font-size:9.5px;line-height:11px;transform:scaleX(1.000);color:#2b3036;font-weight:bold;-webkit-text-stroke:0;letter-spacing:0.36px">ADDRESS GROUP</span>
<span class="t" style="left:890.2px;top:138.5px;font-size:9.5px;line-height:11px;transform:scaleX(1.000);color:#2b3036;font-weight:bold;-webkit-text-stroke:0;letter-spacing:0.80px">DESTINATION</span>
<span class="t" style="left:995.2px;top:112.5px;font-size:9.5px;line-height:11px;transform:scaleX(1.000);color:#2b3036;font-weight:bold;-webkit-text-stroke:0;letter-spacing:0.80px">DESTINATION</span>
<span class="t" style="left:995.2px;top:125.5px;font-size:9.5px;line-height:11px;transform:scaleX(1.000);color:#2b3036;font-weight:bold;-webkit-text-stroke:0;letter-spacing:0.83px">DYNAMIC</span>
<span class="t" style="left:995.2px;top:138.5px;font-size:9.5px;line-height:11px;transform:scaleX(1.000);color:#2b3036;font-weight:bold;-webkit-text-stroke:0;letter-spacing:0.36px">ADDRESS GROUP</span>
<span class="t" style="left:1095.2px;top:125.5px;font-size:9.5px;line-height:11px;transform:scaleX(1.000);color:#2b3036;font-weight:bold;-webkit-text-stroke:0;letter-spacing:0.60px">DYNAMIC USER</span>
<span class="t" style="left:1095.2px;top:138.5px;font-size:9.5px;line-height:11px;transform:scaleX(1.000);color:#2b3036;font-weight:bold;-webkit-text-stroke:0;letter-spacing:0.62px">GROUP</span>
<span class="t" style="left:1195.2px;top:125.5px;font-size:9.5px;line-height:11px;transform:scaleX(1.000);color:#2b3036;font-weight:bold;-webkit-text-stroke:0;letter-spacing:0.68px">TO</span>
<span class="t" style="left:1195.2px;top:138.5px;font-size:9.5px;line-height:11px;transform:scaleX(1.000);color:#2b3036;font-weight:bold;-webkit-text-stroke:0;letter-spacing:0.43px">PORT</span>
<span class="t" style="left:1240.0px;top:138.5px;font-size:9.5px;line-height:11px;transform:scaleX(1.000);color:#2b3036;font-weight:bold;-webkit-text-stroke:0;letter-spacing:0.63px">APPLICATION</span>
<span class="t" style="left:1340.2px;top:138.5px;font-size:9.5px;line-height:11px;transform:scaleX(1.000);color:#2b3036;font-weight:bold;-webkit-text-stroke:0;letter-spacing:0.71px">ACTION</span>
<span class="t" style="left:1420.2px;top:138.5px;font-size:9.5px;line-height:11px;transform:scaleX(1.000);color:#2b3036;font-weight:bold;-webkit-text-stroke:0;letter-spacing:-0.05px">RULE</span>
<span class="t" style="left:1520.2px;top:125.5px;font-size:9.5px;line-height:11px;transform:scaleX(1.000);color:#2b3036;font-weight:bold;-webkit-text-stroke:0;letter-spacing:0.41px">SESSION END</span>
<span class="t" style="left:1520.2px;top:138.5px;font-size:9.5px;line-height:11px;transform:scaleX(1.000);color:#2b3036;font-weight:bold;-webkit-text-stroke:0;letter-spacing:0.35px">REASON</span>
<span class="t" style="left:1620.2px;top:138.5px;font-size:9.5px;line-height:11px;transform:scaleX(1.000);color:#2b3036;font-weight:bold;-webkit-text-stroke:0;letter-spacing:-0.07px">BYTES</span>
<span class="t" style="left:1680.2px;top:112.5px;font-size:9.5px;line-height:11px;transform:scaleX(1.000);color:#2b3036;font-weight:bold;-webkit-text-stroke:0;letter-spacing:1.05px">HTTP/2</span>
<span class="t" style="left:1680.2px;top:125.5px;font-size:9.5px;line-height:11px;transform:scaleX(1.000);color:#2b3036;font-weight:bold;-webkit-text-stroke:0;letter-spacing:0.68px">CONNECTION</span>
<span class="t" style="left:1680.2px;top:138.5px;font-size:9.5px;line-height:11px;transform:scaleX(1.000);color:#2b3036;font-weight:bold;-webkit-text-stroke:0;letter-spacing:0.40px">SESSION ID</span>
<span class="t" style="left:1780.2px;top:125.5px;font-size:9.5px;line-height:11px;transform:scaleX(1.000);color:#2b3036;font-weight:bold;-webkit-text-stroke:0;letter-spacing:0.57px">SDWAN SITE</span>
<span class="t" style="left:1780.2px;top:138.5px;font-size:9.5px;line-height:11px;transform:scaleX(1.000);color:#2b3036;font-weight:bold;-webkit-text-stroke:0;letter-spacing:0.67px">NAME</span>
<div class="gr" style="top:157px"></div>
<div class="gr alt" style="top:185px"></div>
<div class="gr" style="top:213px"></div>
<div class="gr alt" style="top:241px"></div>
<div class="gr" style="top:269px"></div>
<div class="gr alt" style="top:297px"></div>
<div class="gr" style="top:325px"></div>
<div class="gr alt" style="top:353px"></div>
<div class="gr" style="top:381px"></div>
<div class="gr alt" style="top:409px"></div>
<div class="gr" style="top:437px"></div>
<div class="gr alt" style="top:465px"></div>
<div class="gr" style="top:493px"></div>
<div class="gr alt" style="top:521px"></div>
<div class="gr" style="top:549px"></div>
<div class="gr alt" style="top:577px"></div>
<div class="gr" style="top:605px"></div>
<div class="gr alt" style="top:633px"></div>
<div class="gr" style="top:661px"></div>
<div class="gr alt" style="top:689px"></div>
<div class="cb" style="left:221px"></div>
<div class="cb" style="left:249px"></div>
<div class="cb" style="left:349px"></div>
<div class="cb" style="left:449px"></div>
<div class="cb" style="left:514px"></div>
<div class="cb" style="left:579px"></div>
<div class="cb" style="left:684px"></div>
<div class="cb" style="left:784px"></div>
<div class="cb" style="left:884px"></div>
<div class="cb" style="left:989px"></div>
<div class="cb" style="left:1089px"></div>
<div class="cb" style="left:1189px"></div>
<div class="cb" style="left:1234px"></div>
<div class="cb" style="left:1334px"></div>
<div class="cb" style="left:1414px"></div>
<div class="cb" style="left:1514px"></div>
<div class="cb" style="left:1614px"></div>
<div class="cb" style="left:1674px"></div>
<div class="cb" style="left:1774px"></div>
<div class="rg" style="top:157px;height:2px;background:#fff;border-top:1px solid #a0a0a0"></div>
<svg style="left:199px;top:164px" width="18" height="17" viewBox="0 0 18 17"><path d="M8 0.5H1.8Q0.5 0.5 0.5 1.8V12.2Q0.5 13.5 1.8 13.5H10.4Q11.7 13.5 11.7 12.2V10" fill="none" stroke="#0f5f93" stroke-width="1.25"/><path d="M2.2 4.4H6M2.2 7.4H6M2.2 10.5H9" stroke="#0f5f93" stroke-width="1.2"/><circle cx="10" cy="5.9" r="4.6" fill="none" stroke="#c8930f" stroke-width="1.25"/><path d="M12.2 10.2L14.8 14.4" stroke="#c8930f" stroke-width="1.3"/></svg>
<span class="t" style="left:254.7px;top:162px;font-size:11px;line-height:12px;transform:scaleX(1.049);color:#0d66c9">06/04 23:22:27</span>
<span class="t" style="left:354.7px;top:162px;font-size:11px;line-height:12px;transform:scaleX(0.964);color:#0d66c9">end</span>
<span class="t" style="left:454.7px;top:162px;font-size:11px;line-height:12px;transform:scaleX(0.963);color:#0d66c9">inside</span>
<span class="t" style="left:519.7px;top:162px;font-size:11px;line-height:12px;transform:scaleX(1.009);color:#0d66c9">outside</span>
<span class="t" style="left:584.7px;top:162px;font-size:11px;line-height:12px;transform:scaleX(0.985);color:#0d66c9">10.52.0.21</span>
<span class="t" style="left:889.7px;top:162px;font-size:11px;line-height:12px;transform:scaleX(0.951);color:#0d66c9">1.1.1.1</span>
<span class="t" style="left:1194.7px;top:162px;font-size:11px;line-height:12px;transform:scaleX(0.983);color:#0d66c9">53</span>
<span class="t" style="left:1239.7px;top:162px;font-size:11px;line-height:12px;transform:scaleX(0.943);color:#0d66c9">dns-base</span>
<span class="t" style="left:1339.7px;top:162px;font-size:11px;line-height:12px;transform:scaleX(0.997);color:#0d66c9">allow</span>
<span class="t" style="left:1419.7px;top:162px;font-size:11px;line-height:12px;transform:scaleX(0.948);color:#0d66c9">DNS</span>
<span class="t" style="left:1519.7px;top:162px;font-size:11px;line-height:12px;transform:scaleX(0.990);color:#0d66c9">aged-out</span>
<span class="t" style="left:1619.7px;top:162px;font-size:11px;line-height:12px;transform:scaleX(0.996);color:#0d66c9">221</span>
<span class="t" style="left:1679.7px;top:162px;font-size:11px;line-height:12px;transform:scaleX(0.934);color:#0d66c9">0</span>
<div class="rg" style="top:185px;height:2px;background:linear-gradient(#e5e8e9 0,#e5e8e9 1px,#ebf4f7 1px)"></div>
<svg style="left:199px;top:192px" width="18" height="17" viewBox="0 0 18 17"><path d="M8 0.5H1.8Q0.5 0.5 0.5 1.8V12.2Q0.5 13.5 1.8 13.5H10.4Q11.7 13.5 11.7 12.2V10" fill="none" stroke="#0f5f93" stroke-width="1.25"/><path d="M2.2 4.4H6M2.2 7.4H6M2.2 10.5H9" stroke="#0f5f93" stroke-width="1.2"/><circle cx="10" cy="5.9" r="4.6" fill="none" stroke="#c8930f" stroke-width="1.25"/><path d="M12.2 10.2L14.8 14.4" stroke="#c8930f" stroke-width="1.3"/></svg>
<span class="t" style="left:254.7px;top:190px;font-size:11px;line-height:12px;transform:scaleX(1.049);color:#0d66c9">06/04 23:22:22</span>
<span class="t" style="left:354.7px;top:190px;font-size:11px;line-height:12px;transform:scaleX(0.964);color:#0d66c9">end</span>
<span class="t" style="left:454.7px;top:190px;font-size:11px;line-height:12px;transform:scaleX(0.963);color:#0d66c9">inside</span>
<span class="t" style="left:519.7px;top:190px;font-size:11px;line-height:12px;transform:scaleX(1.009);color:#0d66c9">outside</span>
<span class="t" style="left:584.7px;top:190px;font-size:11px;line-height:12px;transform:scaleX(0.985);color:#0d66c9">10.52.0.21</span>
<span class="t" style="left:889.7px;top:190px;font-size:11px;line-height:12px;transform:scaleX(0.987);color:#0d66c9">172.16.1.2</span>
<span class="t" style="left:1194.7px;top:190px;font-size:11px;line-height:12px;transform:scaleX(0.996);color:#0d66c9">443</span>
<span class="t" style="left:1239.7px;top:190px;font-size:11px;line-height:12px;transform:scaleX(0.997);color:#0d66c9">incomplete</span>
<span class="t" style="left:1339.7px;top:190px;font-size:11px;line-height:12px;transform:scaleX(0.997);color:#0d66c9">allow</span>
<span class="t" style="left:1419.7px;top:190px;font-size:11px;line-height:12px;transform:scaleX(0.975);color:#0d66c9">IN_OUT</span>
<span class="t" style="left:1519.7px;top:190px;font-size:11px;line-height:12px;transform:scaleX(0.990);color:#0d66c9">aged-out</span>
<span class="t" style="left:1619.7px;top:190px;font-size:11px;line-height:12px;transform:scaleX(0.996);color:#0d66c9">132</span>
<span class="t" style="left:1679.7px;top:190px;font-size:11px;line-height:12px;transform:scaleX(0.934);color:#0d66c9">0</span>
<div class="rg" style="top:212px;background:linear-gradient(#ebf4f7 0,#ebf4f7 1px,#e5e8e9 1px,#e5e8e9 2px,#fff 2px)"></div>
<svg style="left:199px;top:220px" width="18" height="17" viewBox="0 0 18 17"><path d="M8 0.5H1.8Q0.5 0.5 0.5 1.8V12.2Q0.5 13.5 1.8 13.5H10.4Q11.7 13.5 11.7 12.2V10" fill="none" stroke="#0f5f93" stroke-width="1.25"/><path d="M2.2 4.4H6M2.2 7.4H6M2.2 10.5H9" stroke="#0f5f93" stroke-width="1.2"/><circle cx="10" cy="5.9" r="4.6" fill="none" stroke="#c8930f" stroke-width="1.25"/><path d="M12.2 10.2L14.8 14.4" stroke="#c8930f" stroke-width="1.3"/></svg>
<span class="t" style="left:254.7px;top:218px;font-size:11px;line-height:12px;transform:scaleX(1.049);color:#0d66c9">06/04 23:22:22</span>
<span class="t" style="left:354.7px;top:218px;font-size:11px;line-height:12px;transform:scaleX(0.964);color:#0d66c9">end</span>
<span class="t" style="left:454.7px;top:218px;font-size:11px;line-height:12px;transform:scaleX(0.963);color:#0d66c9">inside</span>
<span class="t" style="left:519.7px;top:218px;font-size:11px;line-height:12px;transform:scaleX(1.009);color:#0d66c9">outside</span>
<span class="t" style="left:584.7px;top:218px;font-size:11px;line-height:12px;transform:scaleX(0.985);color:#0d66c9">10.52.0.21</span>
<span class="t" style="left:889.7px;top:218px;font-size:11px;line-height:12px;transform:scaleX(0.951);color:#0d66c9">1.1.1.1</span>
<span class="t" style="left:1194.7px;top:218px;font-size:11px;line-height:12px;transform:scaleX(0.983);color:#0d66c9">53</span>
<span class="t" style="left:1239.7px;top:218px;font-size:11px;line-height:12px;transform:scaleX(0.943);color:#0d66c9">dns-base</span>
<span class="t" style="left:1339.7px;top:218px;font-size:11px;line-height:12px;transform:scaleX(0.997);color:#0d66c9">allow</span>
<span class="t" style="left:1419.7px;top:218px;font-size:11px;line-height:12px;transform:scaleX(0.948);color:#0d66c9">DNS</span>
<span class="t" style="left:1519.7px;top:218px;font-size:11px;line-height:12px;transform:scaleX(0.990);color:#0d66c9">aged-out</span>
<span class="t" style="left:1619.7px;top:218px;font-size:11px;line-height:12px;transform:scaleX(0.996);color:#0d66c9">403</span>
<span class="t" style="left:1679.7px;top:218px;font-size:11px;line-height:12px;transform:scaleX(0.934);color:#0d66c9">0</span>
<div class="rg" style="top:241px;height:2px;background:linear-gradient(#e5e8e9 0,#e5e8e9 1px,#ebf4f7 1px)"></div>
<svg style="left:199px;top:248px" width="18" height="17" viewBox="0 0 18 17"><path d="M8 0.5H1.8Q0.5 0.5 0.5 1.8V12.2Q0.5 13.5 1.8 13.5H10.4Q11.7 13.5 11.7 12.2V10" fill="none" stroke="#0f5f93" stroke-width="1.25"/><path d="M2.2 4.4H6M2.2 7.4H6M2.2 10.5H9" stroke="#0f5f93" stroke-width="1.2"/><circle cx="10" cy="5.9" r="4.6" fill="none" stroke="#c8930f" stroke-width="1.25"/><path d="M12.2 10.2L14.8 14.4" stroke="#c8930f" stroke-width="1.3"/></svg>
<span class="t" style="left:254.7px;top:246px;font-size:11px;line-height:12px;transform:scaleX(1.049);color:#0d66c9">06/04 23:22:17</span>
<span class="t" style="left:354.7px;top:246px;font-size:11px;line-height:12px;transform:scaleX(0.964);color:#0d66c9">end</span>
<span class="t" style="left:454.7px;top:246px;font-size:11px;line-height:12px;transform:scaleX(0.963);color:#0d66c9">inside</span>
<span class="t" style="left:519.7px;top:246px;font-size:11px;line-height:12px;transform:scaleX(1.009);color:#0d66c9">outside</span>
<span class="t" style="left:584.7px;top:246px;font-size:11px;line-height:12px;transform:scaleX(0.985);color:#0d66c9">10.52.0.21</span>
<span class="t" style="left:889.7px;top:246px;font-size:11px;line-height:12px;transform:scaleX(0.951);color:#0d66c9">1.1.1.1</span>
<span class="t" style="left:1194.7px;top:246px;font-size:11px;line-height:12px;transform:scaleX(0.983);color:#0d66c9">53</span>
<span class="t" style="left:1239.7px;top:246px;font-size:11px;line-height:12px;transform:scaleX(0.943);color:#0d66c9">dns-base</span>
<span class="t" style="left:1339.7px;top:246px;font-size:11px;line-height:12px;transform:scaleX(0.997);color:#0d66c9">allow</span>
<span class="t" style="left:1419.7px;top:246px;font-size:11px;line-height:12px;transform:scaleX(0.948);color:#0d66c9">DNS</span>
<span class="t" style="left:1519.7px;top:246px;font-size:11px;line-height:12px;transform:scaleX(0.990);color:#0d66c9">aged-out</span>
<span class="t" style="left:1619.7px;top:246px;font-size:11px;line-height:12px;transform:scaleX(0.996);color:#0d66c9">221</span>
<span class="t" style="left:1679.7px;top:246px;font-size:11px;line-height:12px;transform:scaleX(0.934);color:#0d66c9">0</span>
<div class="rg" style="top:268px;background:linear-gradient(#ebf4f7 0,#ebf4f7 1px,#e5e8e9 1px,#e5e8e9 2px,#fff 2px)"></div>
<svg style="left:199px;top:276px" width="18" height="17" viewBox="0 0 18 17"><path d="M8 0.5H1.8Q0.5 0.5 0.5 1.8V12.2Q0.5 13.5 1.8 13.5H10.4Q11.7 13.5 11.7 12.2V10" fill="none" stroke="#0f5f93" stroke-width="1.25"/><path d="M2.2 4.4H6M2.2 7.4H6M2.2 10.5H9" stroke="#0f5f93" stroke-width="1.2"/><circle cx="10" cy="5.9" r="4.6" fill="none" stroke="#c8930f" stroke-width="1.25"/><path d="M12.2 10.2L14.8 14.4" stroke="#c8930f" stroke-width="1.3"/></svg>
<span class="t" style="left:254.7px;top:274px;font-size:11px;line-height:12px;transform:scaleX(1.049);color:#0d66c9">06/04 23:22:17</span>
<span class="t" style="left:354.7px;top:274px;font-size:11px;line-height:12px;transform:scaleX(0.964);color:#0d66c9">end</span>
<span class="t" style="left:454.7px;top:274px;font-size:11px;line-height:12px;transform:scaleX(0.963);color:#0d66c9">inside</span>
<span class="t" style="left:519.7px;top:274px;font-size:11px;line-height:12px;transform:scaleX(1.009);color:#0d66c9">outside</span>
<span class="t" style="left:584.7px;top:274px;font-size:11px;line-height:12px;transform:scaleX(0.985);color:#0d66c9">10.52.0.21</span>
<span class="t" style="left:889.7px;top:274px;font-size:11px;line-height:12px;transform:scaleX(0.951);color:#0d66c9">1.1.1.1</span>
<span class="t" style="left:1194.7px;top:274px;font-size:11px;line-height:12px;transform:scaleX(0.983);color:#0d66c9">53</span>
<span class="t" style="left:1239.7px;top:274px;font-size:11px;line-height:12px;transform:scaleX(0.943);color:#0d66c9">dns-base</span>
<span class="t" style="left:1339.7px;top:274px;font-size:11px;line-height:12px;transform:scaleX(0.997);color:#0d66c9">allow</span>
<span class="t" style="left:1419.7px;top:274px;font-size:11px;line-height:12px;transform:scaleX(0.948);color:#0d66c9">DNS</span>
<span class="t" style="left:1519.7px;top:274px;font-size:11px;line-height:12px;transform:scaleX(0.990);color:#0d66c9">aged-out</span>
<span class="t" style="left:1619.7px;top:274px;font-size:11px;line-height:12px;transform:scaleX(0.996);color:#0d66c9">326</span>
<span class="t" style="left:1679.7px;top:274px;font-size:11px;line-height:12px;transform:scaleX(0.934);color:#0d66c9">0</span>
<div class="rg" style="top:297px;height:2px;background:linear-gradient(#e5e8e9 0,#e5e8e9 1px,#ebf4f7 1px)"></div>
<svg style="left:199px;top:304px" width="18" height="17" viewBox="0 0 18 17"><path d="M8 0.5H1.8Q0.5 0.5 0.5 1.8V12.2Q0.5 13.5 1.8 13.5H10.4Q11.7 13.5 11.7 12.2V10" fill="none" stroke="#0f5f93" stroke-width="1.25"/><path d="M2.2 4.4H6M2.2 7.4H6M2.2 10.5H9" stroke="#0f5f93" stroke-width="1.2"/><circle cx="10" cy="5.9" r="4.6" fill="none" stroke="#c8930f" stroke-width="1.25"/><path d="M12.2 10.2L14.8 14.4" stroke="#c8930f" stroke-width="1.3"/></svg>
<span class="t" style="left:254.7px;top:302px;font-size:11px;line-height:12px;transform:scaleX(1.049);color:#0d66c9">06/04 23:22:17</span>
<span class="t" style="left:354.7px;top:302px;font-size:11px;line-height:12px;transform:scaleX(0.964);color:#0d66c9">end</span>
<span class="t" style="left:454.7px;top:302px;font-size:11px;line-height:12px;transform:scaleX(0.963);color:#0d66c9">inside</span>
<span class="t" style="left:519.7px;top:302px;font-size:11px;line-height:12px;transform:scaleX(1.009);color:#0d66c9">outside</span>
<span class="t" style="left:584.7px;top:302px;font-size:11px;line-height:12px;transform:scaleX(0.985);color:#0d66c9">10.52.0.21</span>
<span class="t" style="left:889.7px;top:302px;font-size:11px;line-height:12px;transform:scaleX(0.951);color:#0d66c9">1.1.1.1</span>
<span class="t" style="left:1194.7px;top:302px;font-size:11px;line-height:12px;transform:scaleX(0.983);color:#0d66c9">53</span>
<span class="t" style="left:1239.7px;top:302px;font-size:11px;line-height:12px;transform:scaleX(0.943);color:#0d66c9">dns-base</span>
<span class="t" style="left:1339.7px;top:302px;font-size:11px;line-height:12px;transform:scaleX(0.997);color:#0d66c9">allow</span>
<span class="t" style="left:1419.7px;top:302px;font-size:11px;line-height:12px;transform:scaleX(0.948);color:#0d66c9">DNS</span>
<span class="t" style="left:1519.7px;top:302px;font-size:11px;line-height:12px;transform:scaleX(0.990);color:#0d66c9">aged-out</span>
<span class="t" style="left:1619.7px;top:302px;font-size:11px;line-height:12px;transform:scaleX(0.996);color:#0d66c9">350</span>
<span class="t" style="left:1679.7px;top:302px;font-size:11px;line-height:12px;transform:scaleX(0.934);color:#0d66c9">0</span>
<div class="rg" style="top:324px;background:linear-gradient(#ebf4f7 0,#ebf4f7 1px,#e5e8e9 1px,#e5e8e9 2px,#fff 2px)"></div>
<svg style="left:199px;top:332px" width="18" height="17" viewBox="0 0 18 17"><path d="M8 0.5H1.8Q0.5 0.5 0.5 1.8V12.2Q0.5 13.5 1.8 13.5H10.4Q11.7 13.5 11.7 12.2V10" fill="none" stroke="#0f5f93" stroke-width="1.25"/><path d="M2.2 4.4H6M2.2 7.4H6M2.2 10.5H9" stroke="#0f5f93" stroke-width="1.2"/><circle cx="10" cy="5.9" r="4.6" fill="none" stroke="#c8930f" stroke-width="1.25"/><path d="M12.2 10.2L14.8 14.4" stroke="#c8930f" stroke-width="1.3"/></svg>
<span class="t" style="left:254.7px;top:330px;font-size:11px;line-height:12px;transform:scaleX(1.049);color:#0d66c9">06/04 23:22:17</span>
<span class="t" style="left:354.7px;top:330px;font-size:11px;line-height:12px;transform:scaleX(0.964);color:#0d66c9">end</span>
<span class="t" style="left:454.7px;top:330px;font-size:11px;line-height:12px;transform:scaleX(0.963);color:#0d66c9">inside</span>
<span class="t" style="left:519.7px;top:330px;font-size:11px;line-height:12px;transform:scaleX(1.009);color:#0d66c9">outside</span>
<span class="t" style="left:584.7px;top:330px;font-size:11px;line-height:12px;transform:scaleX(0.985);color:#0d66c9">10.52.0.21</span>
<span class="t" style="left:889.7px;top:330px;font-size:11px;line-height:12px;transform:scaleX(0.951);color:#0d66c9">1.1.1.1</span>
<span class="t" style="left:1194.7px;top:330px;font-size:11px;line-height:12px;transform:scaleX(0.983);color:#0d66c9">53</span>
<span class="t" style="left:1239.7px;top:330px;font-size:11px;line-height:12px;transform:scaleX(0.943);color:#0d66c9">dns-base</span>
<span class="t" style="left:1339.7px;top:330px;font-size:11px;line-height:12px;transform:scaleX(0.997);color:#0d66c9">allow</span>
<span class="t" style="left:1419.7px;top:330px;font-size:11px;line-height:12px;transform:scaleX(0.948);color:#0d66c9">DNS</span>
<span class="t" style="left:1519.7px;top:330px;font-size:11px;line-height:12px;transform:scaleX(0.990);color:#0d66c9">aged-out</span>
<span class="t" style="left:1619.7px;top:330px;font-size:11px;line-height:12px;transform:scaleX(0.996);color:#0d66c9">204</span>
<span class="t" style="left:1679.7px;top:330px;font-size:11px;line-height:12px;transform:scaleX(0.934);color:#0d66c9">0</span>
<div class="rg" style="top:353px;height:2px;background:linear-gradient(#e5e8e9 0,#e5e8e9 1px,#ebf4f7 1px)"></div>
<svg style="left:199px;top:360px" width="18" height="17" viewBox="0 0 18 17"><path d="M8 0.5H1.8Q0.5 0.5 0.5 1.8V12.2Q0.5 13.5 1.8 13.5H10.4Q11.7 13.5 11.7 12.2V10" fill="none" stroke="#0f5f93" stroke-width="1.25"/><path d="M2.2 4.4H6M2.2 7.4H6M2.2 10.5H9" stroke="#0f5f93" stroke-width="1.2"/><circle cx="10" cy="5.9" r="4.6" fill="none" stroke="#c8930f" stroke-width="1.25"/><path d="M12.2 10.2L14.8 14.4" stroke="#c8930f" stroke-width="1.3"/></svg>
<span class="t" style="left:254.7px;top:358px;font-size:11px;line-height:12px;transform:scaleX(1.049);color:#0d66c9">06/04 23:22:17</span>
<span class="t" style="left:354.7px;top:358px;font-size:11px;line-height:12px;transform:scaleX(0.964);color:#0d66c9">end</span>
<span class="t" style="left:454.7px;top:358px;font-size:11px;line-height:12px;transform:scaleX(0.963);color:#0d66c9">inside</span>
<span class="t" style="left:519.7px;top:358px;font-size:11px;line-height:12px;transform:scaleX(1.009);color:#0d66c9">outside</span>
<span class="t" style="left:584.7px;top:358px;font-size:11px;line-height:12px;transform:scaleX(0.985);color:#0d66c9">10.52.0.21</span>
<span class="t" style="left:889.7px;top:358px;font-size:11px;line-height:12px;transform:scaleX(0.951);color:#0d66c9">1.1.1.1</span>
<span class="t" style="left:1194.7px;top:358px;font-size:11px;line-height:12px;transform:scaleX(0.983);color:#0d66c9">53</span>
<span class="t" style="left:1239.7px;top:358px;font-size:11px;line-height:12px;transform:scaleX(0.943);color:#0d66c9">dns-base</span>
<span class="t" style="left:1339.7px;top:358px;font-size:11px;line-height:12px;transform:scaleX(0.997);color:#0d66c9">allow</span>
<span class="t" style="left:1419.7px;top:358px;font-size:11px;line-height:12px;transform:scaleX(0.948);color:#0d66c9">DNS</span>
<span class="t" style="left:1519.7px;top:358px;font-size:11px;line-height:12px;transform:scaleX(0.990);color:#0d66c9">aged-out</span>
<span class="t" style="left:1619.7px;top:358px;font-size:11px;line-height:12px;transform:scaleX(0.996);color:#0d66c9">228</span>
<span class="t" style="left:1679.7px;top:358px;font-size:11px;line-height:12px;transform:scaleX(0.934);color:#0d66c9">0</span>
<div class="rg" style="top:380px;background:linear-gradient(#ebf4f7 0,#ebf4f7 1px,#e5e8e9 1px,#e5e8e9 2px,#fff 2px)"></div>
<svg style="left:199px;top:388px" width="18" height="17" viewBox="0 0 18 17"><path d="M8 0.5H1.8Q0.5 0.5 0.5 1.8V12.2Q0.5 13.5 1.8 13.5H10.4Q11.7 13.5 11.7 12.2V10" fill="none" stroke="#0f5f93" stroke-width="1.25"/><path d="M2.2 4.4H6M2.2 7.4H6M2.2 10.5H9" stroke="#0f5f93" stroke-width="1.2"/><circle cx="10" cy="5.9" r="4.6" fill="none" stroke="#c8930f" stroke-width="1.25"/><path d="M12.2 10.2L14.8 14.4" stroke="#c8930f" stroke-width="1.3"/></svg>
<span class="t" style="left:254.7px;top:386px;font-size:11px;line-height:12px;transform:scaleX(1.049);color:#0d66c9">06/04 23:22:17</span>
<span class="t" style="left:354.7px;top:386px;font-size:11px;line-height:12px;transform:scaleX(0.964);color:#0d66c9">end</span>
<span class="t" style="left:454.7px;top:386px;font-size:11px;line-height:12px;transform:scaleX(0.963);color:#0d66c9">inside</span>
<span class="t" style="left:519.7px;top:386px;font-size:11px;line-height:12px;transform:scaleX(1.009);color:#0d66c9">outside</span>
<span class="t" style="left:584.7px;top:386px;font-size:11px;line-height:12px;transform:scaleX(0.985);color:#0d66c9">10.52.0.21</span>
<span class="t" style="left:889.7px;top:386px;font-size:11px;line-height:12px;transform:scaleX(1.017);color:#0d66c9">162.159.140.229</span>
<span class="t" style="left:1194.7px;top:386px;font-size:11px;line-height:12px;transform:scaleX(0.996);color:#0d66c9">443</span>
<span class="t" style="left:1239.7px;top:386px;font-size:11px;line-height:12px;transform:scaleX(0.864);color:#0d66c9">ssl</span>
<span class="t" style="left:1339.7px;top:386px;font-size:11px;line-height:12px;transform:scaleX(0.997);color:#0d66c9">allow</span>
<span class="t" style="left:1419.7px;top:386px;font-size:11px;line-height:12px;transform:scaleX(0.975);color:#0d66c9">IN_OUT</span>
<span class="t" style="left:1519.7px;top:386px;font-size:11px;line-height:12px;transform:scaleX(1.038);color:#0d66c9">tcp-rst-from-client</span>
<span class="t" style="left:1619.7px;top:386px;font-size:11px;line-height:12px;transform:scaleX(0.959);color:#0d66c9">6.4k</span>
<span class="t" style="left:1679.7px;top:386px;font-size:11px;line-height:12px;transform:scaleX(0.934);color:#0d66c9">0</span>
<div class="rg" style="top:409px;height:2px;background:linear-gradient(#e5e8e9 0,#e5e8e9 1px,#ebf4f7 1px)"></div>
<svg style="left:199px;top:416px" width="18" height="17" viewBox="0 0 18 17"><path d="M8 0.5H1.8Q0.5 0.5 0.5 1.8V12.2Q0.5 13.5 1.8 13.5H10.4Q11.7 13.5 11.7 12.2V10" fill="none" stroke="#0f5f93" stroke-width="1.25"/><path d="M2.2 4.4H6M2.2 7.4H6M2.2 10.5H9" stroke="#0f5f93" stroke-width="1.2"/><circle cx="10" cy="5.9" r="4.6" fill="none" stroke="#c8930f" stroke-width="1.25"/><path d="M12.2 10.2L14.8 14.4" stroke="#c8930f" stroke-width="1.3"/></svg>
<span class="t" style="left:254.7px;top:414px;font-size:11px;line-height:12px;transform:scaleX(1.049);color:#0d66c9">06/04 23:22:17</span>
<span class="t" style="left:354.7px;top:414px;font-size:11px;line-height:12px;transform:scaleX(0.964);color:#0d66c9">end</span>
<span class="t" style="left:454.7px;top:414px;font-size:11px;line-height:12px;transform:scaleX(0.963);color:#0d66c9">inside</span>
<span class="t" style="left:519.7px;top:414px;font-size:11px;line-height:12px;transform:scaleX(1.009);color:#0d66c9">outside</span>
<span class="t" style="left:584.7px;top:414px;font-size:11px;line-height:12px;transform:scaleX(0.985);color:#0d66c9">10.52.0.21</span>
<span class="t" style="left:889.7px;top:414px;font-size:11px;line-height:12px;transform:scaleX(1.017);color:#0d66c9">162.159.140.229</span>
<span class="t" style="left:1194.7px;top:414px;font-size:11px;line-height:12px;transform:scaleX(0.996);color:#0d66c9">443</span>
<span class="t" style="left:1239.7px;top:414px;font-size:11px;line-height:12px;transform:scaleX(0.864);color:#0d66c9">ssl</span>
<span class="t" style="left:1339.7px;top:414px;font-size:11px;line-height:12px;transform:scaleX(0.997);color:#0d66c9">allow</span>
<span class="t" style="left:1419.7px;top:414px;font-size:11px;line-height:12px;transform:scaleX(0.975);color:#0d66c9">IN_OUT</span>
<span class="t" style="left:1519.7px;top:414px;font-size:11px;line-height:12px;transform:scaleX(1.038);color:#0d66c9">tcp-rst-from-client</span>
<span class="t" style="left:1619.7px;top:414px;font-size:11px;line-height:12px;transform:scaleX(0.959);color:#0d66c9">6.4k</span>
<span class="t" style="left:1679.7px;top:414px;font-size:11px;line-height:12px;transform:scaleX(0.934);color:#0d66c9">0</span>
<div class="rg" style="top:436px;background:linear-gradient(#ebf4f7 0,#ebf4f7 1px,#e5e8e9 1px,#e5e8e9 2px,#fff 2px)"></div>
<svg style="left:199px;top:444px" width="18" height="17" viewBox="0 0 18 17"><path d="M8 0.5H1.8Q0.5 0.5 0.5 1.8V12.2Q0.5 13.5 1.8 13.5H10.4Q11.7 13.5 11.7 12.2V10" fill="none" stroke="#0f5f93" stroke-width="1.25"/><path d="M2.2 4.4H6M2.2 7.4H6M2.2 10.5H9" stroke="#0f5f93" stroke-width="1.2"/><circle cx="10" cy="5.9" r="4.6" fill="none" stroke="#c8930f" stroke-width="1.25"/><path d="M12.2 10.2L14.8 14.4" stroke="#c8930f" stroke-width="1.3"/></svg>
<span class="t" style="left:254.7px;top:442px;font-size:11px;line-height:12px;transform:scaleX(1.049);color:#0d66c9">06/04 23:22:17</span>
<span class="t" style="left:354.7px;top:442px;font-size:11px;line-height:12px;transform:scaleX(0.964);color:#0d66c9">end</span>
<span class="t" style="left:454.7px;top:442px;font-size:11px;line-height:12px;transform:scaleX(0.963);color:#0d66c9">inside</span>
<span class="t" style="left:519.7px;top:442px;font-size:11px;line-height:12px;transform:scaleX(1.009);color:#0d66c9">outside</span>
<span class="t" style="left:584.7px;top:442px;font-size:11px;line-height:12px;transform:scaleX(0.985);color:#0d66c9">10.52.0.21</span>
<span class="t" style="left:889.7px;top:442px;font-size:11px;line-height:12px;transform:scaleX(1.017);color:#0d66c9">162.159.140.229</span>
<span class="t" style="left:1194.7px;top:442px;font-size:11px;line-height:12px;transform:scaleX(0.996);color:#0d66c9">443</span>
<span class="t" style="left:1239.7px;top:442px;font-size:11px;line-height:12px;transform:scaleX(0.864);color:#0d66c9">ssl</span>
<span class="t" style="left:1339.7px;top:442px;font-size:11px;line-height:12px;transform:scaleX(0.997);color:#0d66c9">allow</span>
<span class="t" style="left:1419.7px;top:442px;font-size:11px;line-height:12px;transform:scaleX(0.975);color:#0d66c9">IN_OUT</span>
<span class="t" style="left:1519.7px;top:442px;font-size:11px;line-height:12px;transform:scaleX(1.038);color:#0d66c9">tcp-rst-from-client</span>
<span class="t" style="left:1619.7px;top:442px;font-size:11px;line-height:12px;transform:scaleX(0.959);color:#0d66c9">6.3k</span>
<span class="t" style="left:1679.7px;top:442px;font-size:11px;line-height:12px;transform:scaleX(0.934);color:#0d66c9">0</span>
<div class="rg" style="top:465px;height:2px;background:linear-gradient(#e5e8e9 0,#e5e8e9 1px,#ebf4f7 1px)"></div>
<svg style="left:199px;top:472px" width="18" height="17" viewBox="0 0 18 17"><path d="M8 0.5H1.8Q0.5 0.5 0.5 1.8V12.2Q0.5 13.5 1.8 13.5H10.4Q11.7 13.5 11.7 12.2V10" fill="none" stroke="#0f5f93" stroke-width="1.25"/><path d="M2.2 4.4H6M2.2 7.4H6M2.2 10.5H9" stroke="#0f5f93" stroke-width="1.2"/><circle cx="10" cy="5.9" r="4.6" fill="none" stroke="#c8930f" stroke-width="1.25"/><path d="M12.2 10.2L14.8 14.4" stroke="#c8930f" stroke-width="1.3"/></svg>
<span class="t" style="left:254.7px;top:470px;font-size:11px;line-height:12px;transform:scaleX(1.049);color:#0d66c9">06/04 23:22:17</span>
<span class="t" style="left:354.7px;top:470px;font-size:11px;line-height:12px;transform:scaleX(0.964);color:#0d66c9">end</span>
<span class="t" style="left:454.7px;top:470px;font-size:11px;line-height:12px;transform:scaleX(0.963);color:#0d66c9">inside</span>
<span class="t" style="left:519.7px;top:470px;font-size:11px;line-height:12px;transform:scaleX(1.009);color:#0d66c9">outside</span>
<span class="t" style="left:584.7px;top:470px;font-size:11px;line-height:12px;transform:scaleX(0.985);color:#0d66c9">10.52.0.21</span>
<span class="t" style="left:889.7px;top:470px;font-size:11px;line-height:12px;transform:scaleX(0.951);color:#0d66c9">1.1.1.1</span>
<span class="t" style="left:1194.7px;top:470px;font-size:11px;line-height:12px;transform:scaleX(0.983);color:#0d66c9">53</span>
<span class="t" style="left:1239.7px;top:470px;font-size:11px;line-height:12px;transform:scaleX(0.943);color:#0d66c9">dns-base</span>
<span class="t" style="left:1339.7px;top:470px;font-size:11px;line-height:12px;transform:scaleX(0.997);color:#0d66c9">allow</span>
<span class="t" style="left:1419.7px;top:470px;font-size:11px;line-height:12px;transform:scaleX(0.948);color:#0d66c9">DNS</span>
<span class="t" style="left:1519.7px;top:470px;font-size:11px;line-height:12px;transform:scaleX(0.990);color:#0d66c9">aged-out</span>
<span class="t" style="left:1619.7px;top:470px;font-size:11px;line-height:12px;transform:scaleX(0.996);color:#0d66c9">390</span>
<span class="t" style="left:1679.7px;top:470px;font-size:11px;line-height:12px;transform:scaleX(0.934);color:#0d66c9">0</span>
<div class="rg" style="top:492px;background:linear-gradient(#ebf4f7 0,#ebf4f7 1px,#e5e8e9 1px,#e5e8e9 2px,#fff 2px)"></div>
<svg style="left:199px;top:500px" width="18" height="17" viewBox="0 0 18 17"><path d="M8 0.5H1.8Q0.5 0.5 0.5 1.8V12.2Q0.5 13.5 1.8 13.5H10.4Q11.7 13.5 11.7 12.2V10" fill="none" stroke="#0f5f93" stroke-width="1.25"/><path d="M2.2 4.4H6M2.2 7.4H6M2.2 10.5H9" stroke="#0f5f93" stroke-width="1.2"/><circle cx="10" cy="5.9" r="4.6" fill="none" stroke="#c8930f" stroke-width="1.25"/><path d="M12.2 10.2L14.8 14.4" stroke="#c8930f" stroke-width="1.3"/></svg>
<span class="t" style="left:254.7px;top:498px;font-size:11px;line-height:12px;transform:scaleX(1.049);color:#0d66c9">06/04 23:22:17</span>
<span class="t" style="left:354.7px;top:498px;font-size:11px;line-height:12px;transform:scaleX(0.964);color:#0d66c9">end</span>
<span class="t" style="left:454.7px;top:498px;font-size:11px;line-height:12px;transform:scaleX(0.963);color:#0d66c9">inside</span>
<span class="t" style="left:519.7px;top:498px;font-size:11px;line-height:12px;transform:scaleX(1.009);color:#0d66c9">outside</span>
<span class="t" style="left:584.7px;top:498px;font-size:11px;line-height:12px;transform:scaleX(0.985);color:#0d66c9">10.52.0.21</span>
<span class="t" style="left:889.7px;top:498px;font-size:11px;line-height:12px;transform:scaleX(0.951);color:#0d66c9">1.1.1.1</span>
<span class="t" style="left:1194.7px;top:498px;font-size:11px;line-height:12px;transform:scaleX(0.983);color:#0d66c9">53</span>
<span class="t" style="left:1239.7px;top:498px;font-size:11px;line-height:12px;transform:scaleX(0.943);color:#0d66c9">dns-base</span>
<span class="t" style="left:1339.7px;top:498px;font-size:11px;line-height:12px;transform:scaleX(0.997);color:#0d66c9">allow</span>
<span class="t" style="left:1419.7px;top:498px;font-size:11px;line-height:12px;transform:scaleX(0.948);color:#0d66c9">DNS</span>
<span class="t" style="left:1519.7px;top:498px;font-size:11px;line-height:12px;transform:scaleX(0.990);color:#0d66c9">aged-out</span>
<span class="t" style="left:1619.7px;top:498px;font-size:11px;line-height:12px;transform:scaleX(0.996);color:#0d66c9">221</span>
<span class="t" style="left:1679.7px;top:498px;font-size:11px;line-height:12px;transform:scaleX(0.934);color:#0d66c9">0</span>
<div class="rg" style="top:521px;height:2px;background:linear-gradient(#e5e8e9 0,#e5e8e9 1px,#ebf4f7 1px)"></div>
<svg style="left:199px;top:528px" width="18" height="17" viewBox="0 0 18 17"><path d="M8 0.5H1.8Q0.5 0.5 0.5 1.8V12.2Q0.5 13.5 1.8 13.5H10.4Q11.7 13.5 11.7 12.2V10" fill="none" stroke="#0f5f93" stroke-width="1.25"/><path d="M2.2 4.4H6M2.2 7.4H6M2.2 10.5H9" stroke="#0f5f93" stroke-width="1.2"/><circle cx="10" cy="5.9" r="4.6" fill="none" stroke="#c8930f" stroke-width="1.25"/><path d="M12.2 10.2L14.8 14.4" stroke="#c8930f" stroke-width="1.3"/></svg>
<span class="t" style="left:254.7px;top:526px;font-size:11px;line-height:12px;transform:scaleX(1.049);color:#0d66c9">06/04 23:22:17</span>
<span class="t" style="left:354.7px;top:526px;font-size:11px;line-height:12px;transform:scaleX(0.964);color:#0d66c9">end</span>
<span class="t" style="left:454.7px;top:526px;font-size:11px;line-height:12px;transform:scaleX(0.963);color:#0d66c9">inside</span>
<span class="t" style="left:519.7px;top:526px;font-size:11px;line-height:12px;transform:scaleX(1.009);color:#0d66c9">outside</span>
<span class="t" style="left:584.7px;top:526px;font-size:11px;line-height:12px;transform:scaleX(0.985);color:#0d66c9">10.52.0.21</span>
<span class="t" style="left:889.7px;top:526px;font-size:11px;line-height:12px;transform:scaleX(0.951);color:#0d66c9">1.1.1.1</span>
<span class="t" style="left:1194.7px;top:526px;font-size:11px;line-height:12px;transform:scaleX(0.983);color:#0d66c9">53</span>
<span class="t" style="left:1239.7px;top:526px;font-size:11px;line-height:12px;transform:scaleX(0.943);color:#0d66c9">dns-base</span>
<span class="t" style="left:1339.7px;top:526px;font-size:11px;line-height:12px;transform:scaleX(0.997);color:#0d66c9">allow</span>
<span class="t" style="left:1419.7px;top:526px;font-size:11px;line-height:12px;transform:scaleX(0.948);color:#0d66c9">DNS</span>
<span class="t" style="left:1519.7px;top:526px;font-size:11px;line-height:12px;transform:scaleX(0.990);color:#0d66c9">aged-out</span>
<span class="t" style="left:1619.7px;top:526px;font-size:11px;line-height:12px;transform:scaleX(0.996);color:#0d66c9">188</span>
<span class="t" style="left:1679.7px;top:526px;font-size:11px;line-height:12px;transform:scaleX(0.934);color:#0d66c9">0</span>
<div class="rg" style="top:548px;background:linear-gradient(#ebf4f7 0,#ebf4f7 1px,#e5e8e9 1px,#e5e8e9 2px,#fff 2px)"></div>
<svg style="left:199px;top:556px" width="18" height="17" viewBox="0 0 18 17"><path d="M8 0.5H1.8Q0.5 0.5 0.5 1.8V12.2Q0.5 13.5 1.8 13.5H10.4Q11.7 13.5 11.7 12.2V10" fill="none" stroke="#0f5f93" stroke-width="1.25"/><path d="M2.2 4.4H6M2.2 7.4H6M2.2 10.5H9" stroke="#0f5f93" stroke-width="1.2"/><circle cx="10" cy="5.9" r="4.6" fill="none" stroke="#c8930f" stroke-width="1.25"/><path d="M12.2 10.2L14.8 14.4" stroke="#c8930f" stroke-width="1.3"/></svg>
<span class="t" style="left:254.7px;top:554px;font-size:11px;line-height:12px;transform:scaleX(1.049);color:#0d66c9">06/04 23:22:12</span>
<span class="t" style="left:354.7px;top:554px;font-size:11px;line-height:12px;transform:scaleX(0.964);color:#0d66c9">end</span>
<span class="t" style="left:454.7px;top:554px;font-size:11px;line-height:12px;transform:scaleX(0.963);color:#0d66c9">inside</span>
<span class="t" style="left:519.7px;top:554px;font-size:11px;line-height:12px;transform:scaleX(1.009);color:#0d66c9">outside</span>
<span class="t" style="left:584.7px;top:554px;font-size:11px;line-height:12px;transform:scaleX(1.005);color:#0d66c9">198.18.128.21</span>
<span class="t" style="left:889.7px;top:554px;font-size:11px;line-height:12px;transform:scaleX(1.014);color:#0d66c9">198.18.191.255</span>
<span class="t" style="left:1194.7px;top:554px;font-size:11px;line-height:12px;transform:scaleX(0.996);color:#0d66c9">137</span>
<span class="t" style="left:1239.7px;top:554px;font-size:11px;line-height:12px;transform:scaleX(0.981);color:#0d66c9">netbios-ns</span>
<span class="t" style="left:1339.7px;top:554px;font-size:11px;line-height:12px;transform:scaleX(0.997);color:#0d66c9">allow</span>
<span class="t" style="left:1419.7px;top:554px;font-size:11px;line-height:12px;transform:scaleX(0.975);color:#0d66c9">IN_OUT</span>
<span class="t" style="left:1519.7px;top:554px;font-size:11px;line-height:12px;transform:scaleX(0.990);color:#0d66c9">aged-out</span>
<span class="t" style="left:1619.7px;top:554px;font-size:11px;line-height:12px;transform:scaleX(0.996);color:#0d66c9">276</span>
<span class="t" style="left:1679.7px;top:554px;font-size:11px;line-height:12px;transform:scaleX(0.934);color:#0d66c9">0</span>
<div class="rg" style="top:577px;height:2px;background:linear-gradient(#e5e8e9 0,#e5e8e9 1px,#ebf4f7 1px)"></div>
<svg style="left:199px;top:584px" width="18" height="17" viewBox="0 0 18 17"><path d="M8 0.5H1.8Q0.5 0.5 0.5 1.8V12.2Q0.5 13.5 1.8 13.5H10.4Q11.7 13.5 11.7 12.2V10" fill="none" stroke="#0f5f93" stroke-width="1.25"/><path d="M2.2 4.4H6M2.2 7.4H6M2.2 10.5H9" stroke="#0f5f93" stroke-width="1.2"/><circle cx="10" cy="5.9" r="4.6" fill="none" stroke="#c8930f" stroke-width="1.25"/><path d="M12.2 10.2L14.8 14.4" stroke="#c8930f" stroke-width="1.3"/></svg>
<svg style="left:230px;top:584px" width="12" height="17" viewBox="0 0 12 17"><defs><radialGradient id="ga" cx="50%" cy="45%" r="55%"><stop offset="0" stop-color="#4fe84a"/><stop offset="1" stop-color="#1c8a1c"/></radialGradient></defs><g stroke="#fff" stroke-width="1.4" stroke-opacity=".7" fill="none"><rect x="3.1" y="1" width="4.9" height="1.8"/><rect x="3.1" y="4.3" width="4.9" height="2.5"/><path d="M3.1 8.2H8V10.1H10.1L5.5 15L1 10.1H3.1Z"/></g><rect x="3.1" y="1" width="4.9" height="1.8" fill="#127a12"/><rect x="3.1" y="4.3" width="4.9" height="2.5" fill="#1f9a1f" stroke="#127a12" stroke-width=".6"/><path d="M3.1 8.2H8V10.1H10.1L5.5 15L1 10.1H3.1Z" fill="url(#ga)" stroke="#127a12" stroke-width=".7"/></svg>
<span class="t" style="left:254.7px;top:582px;font-size:11px;line-height:12px;transform:scaleX(1.049);color:#0d66c9">06/04 23:22:08</span>
<span class="t" style="left:354.7px;top:582px;font-size:11px;line-height:12px;transform:scaleX(0.964);color:#0d66c9">end</span>
<span class="t" style="left:454.7px;top:582px;font-size:11px;line-height:12px;transform:scaleX(0.963);color:#0d66c9">inside</span>
<span class="t" style="left:519.7px;top:582px;font-size:11px;line-height:12px;transform:scaleX(1.009);color:#0d66c9">outside</span>
<span class="t" style="left:584.7px;top:582px;font-size:11px;line-height:12px;transform:scaleX(0.985);color:#0d66c9">10.51.0.21</span>
<span class="t" style="left:889.7px;top:582px;font-size:11px;line-height:12px;transform:scaleX(1.014);color:#0d66c9">142.251.175.97</span>
<span class="t" style="left:1194.7px;top:582px;font-size:11px;line-height:12px;transform:scaleX(0.996);color:#0d66c9">443</span>
<span class="t" style="left:1239.7px;top:582px;font-size:11px;line-height:12px;transform:scaleX(1.010);color:#0d66c9">unknown-udp</span>
<span class="t" style="left:1339.7px;top:582px;font-size:11px;line-height:12px;transform:scaleX(0.997);color:#0d66c9">allow</span>
<span class="t" style="left:1419.7px;top:582px;font-size:11px;line-height:12px;transform:scaleX(0.975);color:#0d66c9">IN_OUT</span>
<span class="t" style="left:1519.7px;top:582px;font-size:11px;line-height:12px;transform:scaleX(0.990);color:#0d66c9">aged-out</span>
<span class="t" style="left:1619.7px;top:582px;font-size:11px;line-height:12px;transform:scaleX(0.976);color:#0d66c9">13.0k</span>
<span class="t" style="left:1679.7px;top:582px;font-size:11px;line-height:12px;transform:scaleX(0.934);color:#0d66c9">0</span>
<div class="rg" style="top:604px;background:linear-gradient(#ebf4f7 0,#ebf4f7 1px,#e5e8e9 1px,#e5e8e9 2px,#fff 2px)"></div>
<svg style="left:199px;top:612px" width="18" height="17" viewBox="0 0 18 17"><path d="M8 0.5H1.8Q0.5 0.5 0.5 1.8V12.2Q0.5 13.5 1.8 13.5H10.4Q11.7 13.5 11.7 12.2V10" fill="none" stroke="#0f5f93" stroke-width="1.25"/><path d="M2.2 4.4H6M2.2 7.4H6M2.2 10.5H9" stroke="#0f5f93" stroke-width="1.2"/><circle cx="10" cy="5.9" r="4.6" fill="none" stroke="#c8930f" stroke-width="1.25"/><path d="M12.2 10.2L14.8 14.4" stroke="#c8930f" stroke-width="1.3"/></svg>
<span class="t" style="left:254.7px;top:610px;font-size:11px;line-height:12px;transform:scaleX(1.049);color:#0d66c9">06/04 23:22:07</span>
<span class="t" style="left:354.7px;top:610px;font-size:11px;line-height:12px;transform:scaleX(0.964);color:#0d66c9">end</span>
<span class="t" style="left:454.7px;top:610px;font-size:11px;line-height:12px;transform:scaleX(0.963);color:#0d66c9">inside</span>
<span class="t" style="left:519.7px;top:610px;font-size:11px;line-height:12px;transform:scaleX(1.009);color:#0d66c9">outside</span>
<span class="t" style="left:584.7px;top:610px;font-size:11px;line-height:12px;transform:scaleX(0.985);color:#0d66c9">10.52.0.21</span>
<span class="t" style="left:889.7px;top:610px;font-size:11px;line-height:12px;transform:scaleX(1.031);color:#0d66c9">198.18.130.110</span>
<span class="t" style="left:1194.7px;top:610px;font-size:11px;line-height:12px;transform:scaleX(0.996);color:#0d66c9">443</span>
<span class="t" style="left:1239.7px;top:610px;font-size:11px;line-height:12px;transform:scaleX(0.997);color:#0d66c9">incomplete</span>
<span class="t" style="left:1339.7px;top:610px;font-size:11px;line-height:12px;transform:scaleX(0.997);color:#0d66c9">allow</span>
<span class="t" style="left:1419.7px;top:610px;font-size:11px;line-height:12px;transform:scaleX(0.975);color:#0d66c9">IN_OUT</span>
<span class="t" style="left:1519.7px;top:610px;font-size:11px;line-height:12px;transform:scaleX(0.990);color:#0d66c9">aged-out</span>
<span class="t" style="left:1619.7px;top:610px;font-size:11px;line-height:12px;transform:scaleX(0.958);color:#0d66c9">66</span>
<span class="t" style="left:1679.7px;top:610px;font-size:11px;line-height:12px;transform:scaleX(0.934);color:#0d66c9">0</span>
<div class="rg" style="top:633px;height:2px;background:linear-gradient(#e5e8e9 0,#e5e8e9 1px,#ebf4f7 1px)"></div>
<svg style="left:199px;top:640px" width="18" height="17" viewBox="0 0 18 17"><path d="M8 0.5H1.8Q0.5 0.5 0.5 1.8V12.2Q0.5 13.5 1.8 13.5H10.4Q11.7 13.5 11.7 12.2V10" fill="none" stroke="#0f5f93" stroke-width="1.25"/><path d="M2.2 4.4H6M2.2 7.4H6M2.2 10.5H9" stroke="#0f5f93" stroke-width="1.2"/><circle cx="10" cy="5.9" r="4.6" fill="none" stroke="#c8930f" stroke-width="1.25"/><path d="M12.2 10.2L14.8 14.4" stroke="#c8930f" stroke-width="1.3"/></svg>
<span class="t" style="left:254.7px;top:638px;font-size:11px;line-height:12px;transform:scaleX(1.049);color:#0d66c9">06/04 23:22:03</span>
<span class="t" style="left:354.7px;top:638px;font-size:11px;line-height:12px;transform:scaleX(0.964);color:#0d66c9">end</span>
<span class="t" style="left:454.7px;top:638px;font-size:11px;line-height:12px;transform:scaleX(0.963);color:#0d66c9">inside</span>
<span class="t" style="left:519.7px;top:638px;font-size:11px;line-height:12px;transform:scaleX(1.009);color:#0d66c9">outside</span>
<span class="t" style="left:584.7px;top:638px;font-size:11px;line-height:12px;transform:scaleX(0.985);color:#0d66c9">10.51.0.21</span>
<span class="t" style="left:889.7px;top:638px;font-size:11px;line-height:12px;transform:scaleX(0.951);color:#0d66c9">1.1.1.1</span>
<span class="t" style="left:1194.7px;top:638px;font-size:11px;line-height:12px;transform:scaleX(0.983);color:#0d66c9">53</span>
<span class="t" style="left:1239.7px;top:638px;font-size:11px;line-height:12px;transform:scaleX(0.943);color:#0d66c9">dns-base</span>
<span class="t" style="left:1339.7px;top:638px;font-size:11px;line-height:12px;transform:scaleX(0.997);color:#0d66c9">allow</span>
<span class="t" style="left:1419.7px;top:638px;font-size:11px;line-height:12px;transform:scaleX(0.948);color:#0d66c9">DNS</span>
<span class="t" style="left:1519.7px;top:638px;font-size:11px;line-height:12px;transform:scaleX(0.990);color:#0d66c9">aged-out</span>
<span class="t" style="left:1619.7px;top:638px;font-size:11px;line-height:12px;transform:scaleX(0.996);color:#0d66c9">221</span>
<span class="t" style="left:1679.7px;top:638px;font-size:11px;line-height:12px;transform:scaleX(0.934);color:#0d66c9">0</span>
<div class="rg" style="top:660px;background:linear-gradient(#ebf4f7 0,#ebf4f7 1px,#e5e8e9 1px,#e5e8e9 2px,#fff 2px)"></div>
<svg style="left:199px;top:668px" width="18" height="17" viewBox="0 0 18 17"><path d="M8 0.5H1.8Q0.5 0.5 0.5 1.8V12.2Q0.5 13.5 1.8 13.5H10.4Q11.7 13.5 11.7 12.2V10" fill="none" stroke="#0f5f93" stroke-width="1.25"/><path d="M2.2 4.4H6M2.2 7.4H6M2.2 10.5H9" stroke="#0f5f93" stroke-width="1.2"/><circle cx="10" cy="5.9" r="4.6" fill="none" stroke="#c8930f" stroke-width="1.25"/><path d="M12.2 10.2L14.8 14.4" stroke="#c8930f" stroke-width="1.3"/></svg>
<span class="t" style="left:254.7px;top:666px;font-size:11px;line-height:12px;transform:scaleX(1.049);color:#0d66c9">06/04 23:22:02</span>
<span class="t" style="left:354.7px;top:666px;font-size:11px;line-height:12px;transform:scaleX(0.964);color:#0d66c9">end</span>
<span class="t" style="left:454.7px;top:666px;font-size:11px;line-height:12px;transform:scaleX(0.963);color:#0d66c9">inside</span>
<span class="t" style="left:519.7px;top:666px;font-size:11px;line-height:12px;transform:scaleX(1.009);color:#0d66c9">outside</span>
<span class="t" style="left:584.7px;top:666px;font-size:11px;line-height:12px;transform:scaleX(0.985);color:#0d66c9">10.52.0.21</span>
<span class="t" style="left:889.7px;top:666px;font-size:11px;line-height:12px;transform:scaleX(1.031);color:#0d66c9">198.18.130.110</span>
<span class="t" style="left:1194.7px;top:666px;font-size:11px;line-height:12px;transform:scaleX(0.996);color:#0d66c9">443</span>
<span class="t" style="left:1239.7px;top:666px;font-size:11px;line-height:12px;transform:scaleX(0.997);color:#0d66c9">incomplete</span>
<span class="t" style="left:1339.7px;top:666px;font-size:11px;line-height:12px;transform:scaleX(0.997);color:#0d66c9">allow</span>
<span class="t" style="left:1419.7px;top:666px;font-size:11px;line-height:12px;transform:scaleX(0.975);color:#0d66c9">IN_OUT</span>
<span class="t" style="left:1519.7px;top:666px;font-size:11px;line-height:12px;transform:scaleX(0.990);color:#0d66c9">aged-out</span>
<span class="t" style="left:1619.7px;top:666px;font-size:11px;line-height:12px;transform:scaleX(0.996);color:#0d66c9">132</span>
<span class="t" style="left:1679.7px;top:666px;font-size:11px;line-height:12px;transform:scaleX(0.934);color:#0d66c9">0</span>
<div class="rg" style="top:689px;height:2px;background:linear-gradient(#e5e8e9 0,#e5e8e9 1px,#ebf4f7 1px)"></div>
<svg style="left:199px;top:696px" width="18" height="17" viewBox="0 0 18 17"><path d="M8 0.5H1.8Q0.5 0.5 0.5 1.8V12.2Q0.5 13.5 1.8 13.5H10.4Q11.7 13.5 11.7 12.2V10" fill="none" stroke="#0f5f93" stroke-width="1.25"/><path d="M2.2 4.4H6M2.2 7.4H6M2.2 10.5H9" stroke="#0f5f93" stroke-width="1.2"/><circle cx="10" cy="5.9" r="4.6" fill="none" stroke="#c8930f" stroke-width="1.25"/><path d="M12.2 10.2L14.8 14.4" stroke="#c8930f" stroke-width="1.3"/></svg>
<span class="t" style="left:254.7px;top:694px;font-size:11px;line-height:12px;transform:scaleX(1.049);color:#0d66c9">06/04 23:22:02</span>
<span class="t" style="left:354.7px;top:694px;font-size:11px;line-height:12px;transform:scaleX(0.964);color:#0d66c9">end</span>
<span class="t" style="left:454.7px;top:694px;font-size:11px;line-height:12px;transform:scaleX(0.963);color:#0d66c9">inside</span>
<span class="t" style="left:519.7px;top:694px;font-size:11px;line-height:12px;transform:scaleX(1.009);color:#0d66c9">outside</span>
<span class="t" style="left:584.7px;top:694px;font-size:11px;line-height:12px;transform:scaleX(0.985);color:#0d66c9">10.52.0.21</span>
<span class="t" style="left:889.7px;top:694px;font-size:11px;line-height:12px;transform:scaleX(1.004);color:#0d66c9">23.75.23.171</span>
<span class="t" style="left:1194.7px;top:694px;font-size:11px;line-height:12px;transform:scaleX(1.016);color:#0d66c9">80</span>
<span class="t" style="left:1239.8px;top:694px;font-size:11px;line-height:12px;transform:scaleX(0.998);color:#0d66c9">web-browsing</span>
<span class="t" style="left:1339.7px;top:694px;font-size:11px;line-height:12px;transform:scaleX(0.997);color:#0d66c9">allow</span>
<span class="t" style="left:1419.7px;top:694px;font-size:11px;line-height:12px;transform:scaleX(0.975);color:#0d66c9">IN_OUT</span>
<span class="t" style="left:1519.7px;top:694px;font-size:11px;line-height:12px;transform:scaleX(1.041);color:#0d66c9">tcp-fin</span>
<span class="t" style="left:1619.7px;top:694px;font-size:11px;line-height:12px;transform:scaleX(0.996);color:#0d66c9">898</span>
<span class="t" style="left:1679.7px;top:694px;font-size:11px;line-height:12px;transform:scaleX(0.934);color:#0d66c9">0</span>
<div class="a" style="left:193px;top:158px;width:1px;height:562px;background:#c6c8ca"></div>
<div class="a" style="left:194px;top:158px;width:3.5px;height:562px;background:rgba(0,0,0,.04)"></div>
<svg style="left:193.8px;top:494px" width="4" height="6" viewBox="0 0 4 6"><path d="M3.4 0.2L0.2 2.5L3.4 4.8Z" fill="#9a9a9a"/></svg>
<div class="a" style="left:288.3px;top:56px;width:189.7px;height:20px;background:#fff;border:1px solid #7a7a7a;border-radius:2px"></div>
<div class="a" style="left:458px;top:56px;width:20px;height:20px;border:1px solid #2b97e0;border-left:none;border-radius:0 2px 2px 0"></div>
<div class="a" style="left:292.8px;top:60px;width:13px;height:11.7px;background:#b3d7fe"></div>
<svg style="left:460.5px;top:63.8px" width="10" height="6" viewBox="0 0 10 6"><path d="M0.5 0.5L5 5L9.5 0.5" fill="none" stroke="#2b8fd6" stroke-width="1.2"/></svg>
<div class="a" style="left:288.4px;top:76px;width:189px;height:85.5px;background:#fff;border:1px solid #b4b4b4;border-top:none;box-shadow:0 2px 4px rgba(0,0,0,.35)"></div>
<div class="a" style="left:289px;top:81px;width:188px;height:22px;background:#e2f1fa"></div>
<div class="a" style="left:289px;top:148px;width:188px;height:1px;background:#9c9c9c"></div>
<svg style="left:470px;top:154px" width="7" height="7" viewBox="0 0 7 7"><g fill="#6f8422"><rect x="4.2" y="1" width="2" height="2"/><rect x="4.2" y="4" width="2" height="2"/><rect x="1.2" y="4" width="2" height="2"/></g></svg>
<span class="t" style="left:293.7px;top:59px;font-size:12px;line-height:14px;transform:scaleX(0.901);color:#111">All</span>
<span class="t" style="left:298.0px;top:84.3px;font-size:12px;line-height:14px;transform:scaleX(0.923);color:#222">All</span>
<span class="t" style="left:298.0px;top:105.7px;font-size:12px;line-height:14px;transform:scaleX(0.852);color:#222">JKT</span>
<span class="t" style="left:298.3px;top:129px;font-size:12px;line-height:14px;transform:scaleX(0.968);color:#222">MKW</span>
</div></body></html>
